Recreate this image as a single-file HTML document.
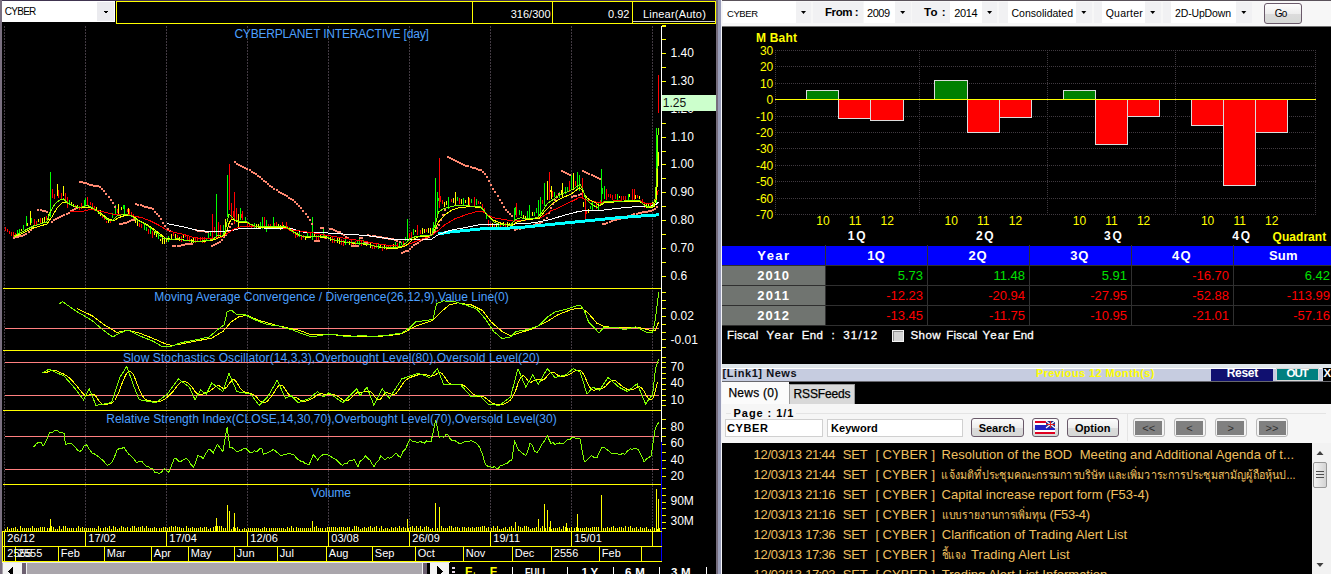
<!DOCTYPE html><html><head><meta charset="utf-8"><title>CYBER</title><style>
html,body{margin:0;padding:0;background:#000;}
body{width:1331px;height:574px;overflow:hidden;position:relative;font-family:"Liberation Sans",sans-serif;font-size:12px;color:#fff;}
.a{position:absolute;box-sizing:border-box;}
.t{position:absolute;white-space:nowrap;line-height:1;}
.b{font-weight:bold;}
svg{position:absolute;left:0;top:0;}
svg text{font-family:"Liberation Sans",sans-serif;}
.dd{position:absolute;background:#fff;box-sizing:border-box;}
.btn{position:absolute;box-sizing:border-box;border:1px solid #6a5a6a;border-radius:3px;background:linear-gradient(#fcfcfc,#eeeeee 50%,#dcdcdc 51%,#d6d8d6);color:#000;text-align:center;}
</style></head><body>
<svg width="1331" height="574" viewBox="0 0 1331 574">
<g shape-rendering="crispEdges">
<rect x="0" y="0" width="2" height="574" fill="#7a7080" />
<line x1="4.5" y1="26" x2="4.5" y2="531" stroke="#423a42" stroke-width="1" stroke-dasharray="2 1"/>
<line x1="85.5" y1="26" x2="85.5" y2="531" stroke="#423a42" stroke-width="1" stroke-dasharray="2 1"/>
<line x1="166.5" y1="26" x2="166.5" y2="531" stroke="#423a42" stroke-width="1" stroke-dasharray="2 1"/>
<line x1="247.5" y1="26" x2="247.5" y2="531" stroke="#423a42" stroke-width="1" stroke-dasharray="2 1"/>
<line x1="328.5" y1="26" x2="328.5" y2="531" stroke="#423a42" stroke-width="1" stroke-dasharray="2 1"/>
<line x1="409.5" y1="26" x2="409.5" y2="531" stroke="#423a42" stroke-width="1" stroke-dasharray="2 1"/>
<line x1="490.5" y1="26" x2="490.5" y2="531" stroke="#423a42" stroke-width="1" stroke-dasharray="2 1"/>
<line x1="571.5" y1="26" x2="571.5" y2="531" stroke="#423a42" stroke-width="1" stroke-dasharray="2 1"/>
<line x1="652.5" y1="26" x2="652.5" y2="531" stroke="#423a42" stroke-width="1" stroke-dasharray="2 1"/>
<line x1="3" y1="288.5" x2="661" y2="288.5" stroke="#ffff00" stroke-width="1" />
<line x1="3" y1="350.5" x2="661" y2="350.5" stroke="#ffff00" stroke-width="1" />
<line x1="3" y1="410.5" x2="661" y2="410.5" stroke="#ffff00" stroke-width="1" />
<line x1="3" y1="484.5" x2="661" y2="484.5" stroke="#ffff00" stroke-width="1" />
<line x1="5" y1="328.5" x2="659" y2="328.5" stroke="#ff8080" stroke-width="1" />
<line x1="5" y1="362.5" x2="659" y2="362.5" stroke="#ff8080" stroke-width="1" />
<line x1="5" y1="395.5" x2="659" y2="395.5" stroke="#ff8080" stroke-width="1" />
<line x1="5" y1="436.5" x2="659" y2="436.5" stroke="#ff8080" stroke-width="1" />
<line x1="5" y1="469.5" x2="659" y2="469.5" stroke="#ff8080" stroke-width="1" />
</g>
<g shape-rendering="crispEdges">
<rect x="5" y="227" width="1" height="4" fill="#ff0000" />
<rect x="7" y="229" width="1" height="3" fill="#ff0000" />
<rect x="9" y="231" width="1" height="3" fill="#ff0000" />
<rect x="11" y="232" width="1" height="4" fill="#ff0000" />
<rect x="13" y="232" width="1" height="6" fill="#ff0000" />
<rect x="15" y="233" width="1" height="4" fill="#ff0000" />
<rect x="17" y="230" width="1" height="5" fill="#00ff00" />
<rect x="19" y="229" width="1" height="5" fill="#00ff00" />
<rect x="21" y="229" width="1" height="2" fill="#ffff00" />
<rect x="23" y="225" width="1" height="5" fill="#00ff00" />
<rect x="27" y="223" width="1" height="3" fill="#ffff00" />
<rect x="31" y="218" width="1" height="5" fill="#00ff00" />
<rect x="34" y="219" width="1" height="6" fill="#ff0000" />
<rect x="36" y="221" width="1" height="4" fill="#ff0000" />
<rect x="38" y="219" width="1" height="3" fill="#ffff00" />
<rect x="40" y="218" width="1" height="6" fill="#ff0000" />
<rect x="42" y="218" width="1" height="5" fill="#ffff00" />
<rect x="44" y="217" width="1" height="5" fill="#ffff00" />
<rect x="46" y="216" width="1" height="4" fill="#ff0000" />
<rect x="48" y="214" width="1" height="6" fill="#ffff00" />
<rect x="71" y="202" width="1" height="3" fill="#ffff00" />
<rect x="73" y="204" width="1" height="3" fill="#ffff00" />
<rect x="75" y="205" width="1" height="3" fill="#ff0000" />
<rect x="77" y="205" width="1" height="3" fill="#ffff00" />
<rect x="79" y="206" width="1" height="4" fill="#ff0000" />
<rect x="81" y="203" width="1" height="6" fill="#ff0000" />
<rect x="85" y="198" width="1" height="7" fill="#00ff00" />
<rect x="90" y="202" width="1" height="3" fill="#ff0000" />
<rect x="92" y="203" width="1" height="4" fill="#ff0000" />
<rect x="94" y="206" width="1" height="5" fill="#ff0000" />
<rect x="96" y="207" width="1" height="4" fill="#ffff00" />
<rect x="98" y="210" width="1" height="4" fill="#ffff00" />
<rect x="100" y="210" width="1" height="6" fill="#ffff00" />
<rect x="102" y="214" width="1" height="4" fill="#ff0000" />
<rect x="104" y="217" width="1" height="3" fill="#ff0000" />
<rect x="106" y="221" width="1" height="2" fill="#ff0000" />
<rect x="108" y="220" width="1" height="3" fill="#ffff00" />
<rect x="110" y="219" width="1" height="4" fill="#ff0000" />
<rect x="112" y="213" width="1" height="5" fill="#00ff00" />
<rect x="117" y="209" width="1" height="4" fill="#ff0000" />
<rect x="121" y="207" width="1" height="3" fill="#ffff00" />
<rect x="123" y="205" width="1" height="4" fill="#00ff00" />
<rect x="127" y="209" width="1" height="3" fill="#ff0000" />
<rect x="129" y="209" width="1" height="7" fill="#ff0000" />
<rect x="131" y="212" width="1" height="4" fill="#ff0000" />
<rect x="133" y="214" width="1" height="5" fill="#ff0000" />
<rect x="135" y="217" width="1" height="6" fill="#ffff00" />
<rect x="137" y="221" width="1" height="5" fill="#ffff00" />
<rect x="139" y="223" width="1" height="4" fill="#ff0000" />
<rect x="141" y="224" width="1" height="4" fill="#ff0000" />
<rect x="144" y="223" width="1" height="7" fill="#00ff00" />
<rect x="146" y="227" width="1" height="4" fill="#00ff00" />
<rect x="148" y="229" width="1" height="5" fill="#ff0000" />
<rect x="150" y="228" width="1" height="6" fill="#00ff00" />
<rect x="152" y="231" width="1" height="7" fill="#ff0000" />
<rect x="154" y="232" width="1" height="3" fill="#ffff00" />
<rect x="156" y="233" width="1" height="4" fill="#ffff00" />
<rect x="158" y="233" width="1" height="6" fill="#00ff00" />
<rect x="160" y="239" width="1" height="2" fill="#ffff00" />
<rect x="162" y="238" width="1" height="6" fill="#ffff00" />
<rect x="164" y="238" width="1" height="6" fill="#ffff00" />
<rect x="166" y="238" width="1" height="4" fill="#ffff00" />
<rect x="168" y="236" width="1" height="6" fill="#00ff00" />
<rect x="171" y="234" width="1" height="5" fill="#ffff00" />
<rect x="173" y="232" width="1" height="4" fill="#ff0000" />
<rect x="175" y="234" width="1" height="4" fill="#ffff00" />
<rect x="177" y="235" width="1" height="4" fill="#ff0000" />
<rect x="179" y="237" width="1" height="4" fill="#ffff00" />
<rect x="181" y="236" width="1" height="6" fill="#ff0000" />
<rect x="183" y="235" width="1" height="3" fill="#ffff00" />
<rect x="185" y="234" width="1" height="3" fill="#ff0000" />
<rect x="187" y="235" width="1" height="5" fill="#ff0000" />
<rect x="189" y="237" width="1" height="5" fill="#ff0000" />
<rect x="191" y="239" width="1" height="4" fill="#ffff00" />
<rect x="193" y="238" width="1" height="5" fill="#ffff00" />
<rect x="195" y="237" width="1" height="6" fill="#ff0000" />
<rect x="197" y="237" width="1" height="5" fill="#ff0000" />
<rect x="200" y="237" width="1" height="5" fill="#ff0000" />
<rect x="202" y="237" width="1" height="6" fill="#ff0000" />
<rect x="204" y="237" width="1" height="6" fill="#ff0000" />
<rect x="206" y="238" width="1" height="3" fill="#00ff00" />
<rect x="208" y="232" width="1" height="7" fill="#00ff00" />
<rect x="210" y="231" width="1" height="5" fill="#00ff00" />
<rect x="214" y="227" width="1" height="6" fill="#ff0000" />
<rect x="233" y="211" width="1" height="6" fill="#ff0000" />
<rect x="241" y="214" width="1" height="4" fill="#ff0000" />
<rect x="247" y="222" width="1" height="4" fill="#ff0000" />
<rect x="249" y="224" width="1" height="3" fill="#ff0000" />
<rect x="251" y="224" width="1" height="4" fill="#ff0000" />
<rect x="254" y="223" width="1" height="5" fill="#00ff00" />
<rect x="256" y="224" width="1" height="4" fill="#ffff00" />
<rect x="258" y="224" width="1" height="5" fill="#ffff00" />
<rect x="260" y="222" width="1" height="5" fill="#00ff00" />
<rect x="268" y="224" width="1" height="4" fill="#ff0000" />
<rect x="270" y="224" width="1" height="4" fill="#ff0000" />
<rect x="274" y="223" width="1" height="5" fill="#ff0000" />
<rect x="278" y="224" width="1" height="5" fill="#ffff00" />
<rect x="280" y="225" width="1" height="5" fill="#ffff00" />
<rect x="283" y="225" width="1" height="3" fill="#ffff00" />
<rect x="287" y="226" width="1" height="2" fill="#ff0000" />
<rect x="289" y="227" width="1" height="4" fill="#ff0000" />
<rect x="291" y="228" width="1" height="4" fill="#ff0000" />
<rect x="293" y="231" width="1" height="3" fill="#ff0000" />
<rect x="295" y="233" width="1" height="5" fill="#ff0000" />
<rect x="297" y="232" width="1" height="5" fill="#ff0000" />
<rect x="299" y="232" width="1" height="5" fill="#00ff00" />
<rect x="301" y="235" width="1" height="5" fill="#ff0000" />
<rect x="303" y="235" width="1" height="3" fill="#ff0000" />
<rect x="305" y="236" width="1" height="4" fill="#ffff00" />
<rect x="307" y="232" width="1" height="4" fill="#00ff00" />
<rect x="310" y="232" width="1" height="4" fill="#ff0000" />
<rect x="314" y="233" width="1" height="3" fill="#ffff00" />
<rect x="316" y="235" width="1" height="6" fill="#ff0000" />
<rect x="318" y="235" width="1" height="5" fill="#ff0000" />
<rect x="320" y="235" width="1" height="3" fill="#ffff00" />
<rect x="324" y="235" width="1" height="4" fill="#ff0000" />
<rect x="326" y="236" width="1" height="2" fill="#ffff00" />
<rect x="328" y="237" width="1" height="2" fill="#ffff00" />
<rect x="330" y="237" width="1" height="4" fill="#ffff00" />
<rect x="332" y="237" width="1" height="6" fill="#ff0000" />
<rect x="334" y="238" width="1" height="5" fill="#ff0000" />
<rect x="337" y="238" width="1" height="5" fill="#ffff00" />
<rect x="339" y="238" width="1" height="6" fill="#ffff00" />
<rect x="341" y="239" width="1" height="6" fill="#ff0000" />
<rect x="343" y="240" width="1" height="6" fill="#ff0000" />
<rect x="345" y="238" width="1" height="7" fill="#00ff00" />
<rect x="347" y="241" width="1" height="2" fill="#ff0000" />
<rect x="349" y="241" width="1" height="4" fill="#ffff00" />
<rect x="351" y="240" width="1" height="6" fill="#ff0000" />
<rect x="353" y="242" width="1" height="5" fill="#ff0000" />
<rect x="355" y="241" width="1" height="5" fill="#ff0000" />
<rect x="357" y="241" width="1" height="3" fill="#00ff00" />
<rect x="359" y="239" width="1" height="6" fill="#00ff00" />
<rect x="361" y="241" width="1" height="5" fill="#ff0000" />
<rect x="363" y="240" width="1" height="5" fill="#00ff00" />
<rect x="366" y="242" width="1" height="4" fill="#ffff00" />
<rect x="368" y="242" width="1" height="3" fill="#ff0000" />
<rect x="370" y="243" width="1" height="5" fill="#ffff00" />
<rect x="372" y="245" width="1" height="4" fill="#ff0000" />
<rect x="374" y="245" width="1" height="4" fill="#ff0000" />
<rect x="376" y="243" width="1" height="5" fill="#ff0000" />
<rect x="378" y="243" width="1" height="6" fill="#00ff00" />
<rect x="380" y="244" width="1" height="4" fill="#ffff00" />
<rect x="382" y="246" width="1" height="5" fill="#ff0000" />
<rect x="384" y="244" width="1" height="5" fill="#ffff00" />
<rect x="386" y="245" width="1" height="5" fill="#ff0000" />
<rect x="388" y="246" width="1" height="2" fill="#ff0000" />
<rect x="390" y="245" width="1" height="3" fill="#ff0000" />
<rect x="393" y="244" width="1" height="4" fill="#ffff00" />
<rect x="395" y="242" width="1" height="6" fill="#00ff00" />
<rect x="397" y="243" width="1" height="5" fill="#ff0000" />
<rect x="399" y="241" width="1" height="6" fill="#00ff00" />
<rect x="401" y="242" width="1" height="3" fill="#00ff00" />
<rect x="403" y="241" width="1" height="5" fill="#ff0000" />
<rect x="405" y="237" width="1" height="4" fill="#00ff00" />
<rect x="409" y="233" width="1" height="7" fill="#ff0000" />
<rect x="411" y="232" width="1" height="6" fill="#ff0000" />
<rect x="413" y="229" width="1" height="6" fill="#00ff00" />
<rect x="415" y="230" width="1" height="2" fill="#ffff00" />
<rect x="420" y="230" width="1" height="4" fill="#ff0000" />
<rect x="422" y="228" width="1" height="6" fill="#ffff00" />
<rect x="424" y="229" width="1" height="4" fill="#ffff00" />
<rect x="426" y="229" width="1" height="3" fill="#ff0000" />
<rect x="428" y="228" width="1" height="5" fill="#ffff00" />
<rect x="430" y="228" width="1" height="6" fill="#ffff00" />
<rect x="432" y="228" width="1" height="3" fill="#00ff00" />
<rect x="438" y="198" width="1" height="3" fill="#00ff00" />
<rect x="440" y="196" width="1" height="6" fill="#ff0000" />
<rect x="442" y="200" width="1" height="4" fill="#ff0000" />
<rect x="444" y="202" width="1" height="5" fill="#ffff00" />
<rect x="446" y="201" width="1" height="4" fill="#ffff00" />
<rect x="451" y="199" width="1" height="3" fill="#ff0000" />
<rect x="453" y="198" width="1" height="5" fill="#ffff00" />
<rect x="457" y="197" width="1" height="4" fill="#00ff00" />
<rect x="459" y="198" width="1" height="6" fill="#ff0000" />
<rect x="461" y="199" width="1" height="5" fill="#ffff00" />
<rect x="463" y="198" width="1" height="7" fill="#00ff00" />
<rect x="465" y="200" width="1" height="3" fill="#ffff00" />
<rect x="469" y="198" width="1" height="7" fill="#ff0000" />
<rect x="471" y="199" width="1" height="4" fill="#00ff00" />
<rect x="476" y="199" width="1" height="6" fill="#00ff00" />
<rect x="478" y="201" width="1" height="3" fill="#ff0000" />
<rect x="480" y="202" width="1" height="2" fill="#ffff00" />
<rect x="482" y="204" width="1" height="4" fill="#ff0000" />
<rect x="484" y="208" width="1" height="3" fill="#ff0000" />
<rect x="486" y="213" width="1" height="6" fill="#00ff00" />
<rect x="488" y="220" width="1" height="6" fill="#ff0000" />
<rect x="490" y="223" width="1" height="4" fill="#ff0000" />
<rect x="492" y="223" width="1" height="4" fill="#ffff00" />
<rect x="494" y="224" width="1" height="3" fill="#ff0000" />
<rect x="496" y="223" width="1" height="4" fill="#ffff00" />
<rect x="498" y="222" width="1" height="5" fill="#00ff00" />
<rect x="500" y="223" width="1" height="5" fill="#ff0000" />
<rect x="503" y="222" width="1" height="4" fill="#ffff00" />
<rect x="505" y="223" width="1" height="4" fill="#ff0000" />
<rect x="507" y="222" width="1" height="5" fill="#ffff00" />
<rect x="509" y="223" width="1" height="3" fill="#ffff00" />
<rect x="511" y="223" width="1" height="2" fill="#ff0000" />
<rect x="515" y="207" width="1" height="8" fill="#00ff00" />
<rect x="519" y="210" width="1" height="5" fill="#00ff00" />
<rect x="521" y="211" width="1" height="5" fill="#00ff00" />
<rect x="523" y="215" width="1" height="3" fill="#ffff00" />
<rect x="525" y="216" width="1" height="2" fill="#ffff00" />
<rect x="527" y="211" width="1" height="7" fill="#00ff00" />
<rect x="532" y="212" width="1" height="4" fill="#ffff00" />
<rect x="534" y="212" width="1" height="4" fill="#00ff00" />
<rect x="536" y="208" width="1" height="5" fill="#00ff00" />
<rect x="542" y="200" width="1" height="4" fill="#ff0000" />
<rect x="550" y="190" width="1" height="2" fill="#ffff00" />
<rect x="552" y="191" width="1" height="6" fill="#ff0000" />
<rect x="554" y="192" width="1" height="5" fill="#00ff00" />
<rect x="556" y="195" width="1" height="4" fill="#ff0000" />
<rect x="559" y="192" width="1" height="6" fill="#00ff00" />
<rect x="561" y="190" width="1" height="4" fill="#ffff00" />
<rect x="565" y="187" width="1" height="7" fill="#00ff00" />
<rect x="567" y="187" width="1" height="4" fill="#00ff00" />
<rect x="575" y="181" width="1" height="5" fill="#ff0000" />
<rect x="583" y="202" width="1" height="5" fill="#ffff00" />
<rect x="586" y="210" width="1" height="4" fill="#ff0000" />
<rect x="588" y="209" width="1" height="4" fill="#ffff00" />
<rect x="590" y="206" width="1" height="3" fill="#00ff00" />
<rect x="592" y="201" width="1" height="9" fill="#00ff00" />
<rect x="594" y="205" width="1" height="2" fill="#ffff00" />
<rect x="596" y="204" width="1" height="5" fill="#ff0000" />
<rect x="598" y="203" width="1" height="7" fill="#00ff00" />
<rect x="600" y="200" width="1" height="5" fill="#ff0000" />
<rect x="602" y="188" width="1" height="6" fill="#00ff00" />
<rect x="608" y="194" width="1" height="3" fill="#ff0000" />
<rect x="610" y="194" width="1" height="4" fill="#ff0000" />
<rect x="612" y="195" width="1" height="5" fill="#ff0000" />
<rect x="615" y="194" width="1" height="5" fill="#ff0000" />
<rect x="617" y="194" width="1" height="6" fill="#00ff00" />
<rect x="619" y="196" width="1" height="2" fill="#ffff00" />
<rect x="621" y="196" width="1" height="6" fill="#ff0000" />
<rect x="623" y="196" width="1" height="4" fill="#ff0000" />
<rect x="625" y="196" width="1" height="4" fill="#ff0000" />
<rect x="629" y="194" width="1" height="3" fill="#ffff00" />
<rect x="635" y="195" width="1" height="4" fill="#ffff00" />
<rect x="637" y="195" width="1" height="3" fill="#ff0000" />
<rect x="639" y="196" width="1" height="3" fill="#ffff00" />
<rect x="642" y="199" width="1" height="5" fill="#ff0000" />
<rect x="644" y="203" width="1" height="5" fill="#ff0000" />
<rect x="646" y="204" width="1" height="4" fill="#ffff00" />
<rect x="648" y="204" width="1" height="3" fill="#ffff00" />
<rect x="650" y="204" width="1" height="4" fill="#ff0000" />
<rect x="652" y="202" width="1" height="6" fill="#ffff00" />
<rect x="654" y="203" width="1" height="4" fill="#ffff00" />
<rect x="54" y="194" width="1" height="5" fill="#ff0000" />
<rect x="58" y="190" width="1" height="8" fill="#ff0000" />
<rect x="61" y="193" width="1" height="7" fill="#ff0000" />
<rect x="65" y="193" width="1" height="8" fill="#ff0000" />
<rect x="67" y="197" width="1" height="11" fill="#ff0000" />
<rect x="69" y="200" width="1" height="5" fill="#00ff00" />
<rect x="50" y="172" width="1" height="45" fill="#00ff00" />
<rect x="57" y="184" width="1" height="12" fill="#ffff00" />
<rect x="63" y="186" width="1" height="10" fill="#ffff00" />
<rect x="52" y="189" width="1" height="9" fill="#ff0000" />
<rect x="30" y="211" width="1" height="14" fill="#ffff00" />
<rect x="26" y="216" width="1" height="10" fill="#00ff00" />
<rect x="115" y="205" width="1" height="10" fill="#00ff00" />
<rect x="118" y="204" width="1" height="10" fill="#ffff00" />
<rect x="124" y="205" width="1" height="9" fill="#00ff00" />
<rect x="128" y="208" width="1" height="7" fill="#ffff00" />
<rect x="87" y="197" width="1" height="9" fill="#ff0000" />
<rect x="84" y="200" width="1" height="7" fill="#00ff00" />
<rect x="212" y="214" width="1" height="27" fill="#ff0000" />
<rect x="216" y="194" width="1" height="43" fill="#00ff00" />
<rect x="218" y="222" width="1" height="15" fill="#ff0000" />
<rect x="220" y="225" width="1" height="12" fill="#ff0000" />
<rect x="223" y="225" width="1" height="10" fill="#00ff00" />
<rect x="225" y="219" width="1" height="10" fill="#ffff00" />
<rect x="227" y="175" width="1" height="42" fill="#00ff00" />
<rect x="229" y="164" width="1" height="46" fill="#ff0000" />
<rect x="231" y="203" width="1" height="17" fill="#ff0000" />
<rect x="234" y="192" width="1" height="32" fill="#ff0000" />
<rect x="236" y="208" width="1" height="14" fill="#ff0000" />
<rect x="238" y="214" width="1" height="13" fill="#ffff00" />
<rect x="240" y="208" width="1" height="12" fill="#00ff00" />
<rect x="242" y="211" width="1" height="9" fill="#ff0000" />
<rect x="245" y="217" width="1" height="6" fill="#00ff00" />
<rect x="262" y="217" width="1" height="12" fill="#00ff00" />
<rect x="264" y="217" width="1" height="11" fill="#ff0000" />
<rect x="266" y="220" width="1" height="12" fill="#00ff00" />
<rect x="273" y="217" width="1" height="10" fill="#00ff00" />
<rect x="276" y="222" width="1" height="6" fill="#ff0000" />
<rect x="282" y="222" width="1" height="7" fill="#ff0000" />
<rect x="286" y="222" width="1" height="7" fill="#ff0000" />
<rect x="312" y="217" width="1" height="23" fill="#00ff00" />
<rect x="323" y="229" width="1" height="8" fill="#00ff00" />
<rect x="407" y="219" width="1" height="22" fill="#00ff00" />
<rect x="417" y="225" width="1" height="10" fill="#ff0000" />
<rect x="433" y="222" width="1" height="12" fill="#00ff00" />
<rect x="435" y="178" width="1" height="54" fill="#00ff00" />
<rect x="437" y="192" width="1" height="23" fill="#00ff00" />
<rect x="439" y="158" width="1" height="50" fill="#ff0000" />
<rect x="448" y="197" width="1" height="12" fill="#00ff00" />
<rect x="455" y="192" width="1" height="13" fill="#ffff00" />
<rect x="468" y="197" width="1" height="9" fill="#ffff00" />
<rect x="474" y="197" width="1" height="10" fill="#ff0000" />
<rect x="514" y="208" width="1" height="14" fill="#00ff00" />
<rect x="516" y="203" width="1" height="14" fill="#ff0000" />
<rect x="529" y="205" width="1" height="14" fill="#00ff00" />
<rect x="538" y="200" width="1" height="17" fill="#00ff00" />
<rect x="540" y="197" width="1" height="20" fill="#00ff00" />
<rect x="544" y="183" width="1" height="23" fill="#00ff00" />
<rect x="547" y="181" width="1" height="19" fill="#ffff00" />
<rect x="549" y="172" width="1" height="28" fill="#ff0000" />
<rect x="551" y="186" width="1" height="13" fill="#ffff00" />
<rect x="562" y="183" width="1" height="14" fill="#ffff00" />
<rect x="569" y="181" width="1" height="11" fill="#ff0000" />
<rect x="571" y="175" width="1" height="15" fill="#00ff00" />
<rect x="573" y="173" width="1" height="17" fill="#ffff00" />
<rect x="577" y="172" width="1" height="18" fill="#00ff00" />
<rect x="579" y="175" width="1" height="16" fill="#00ff00" />
<rect x="582" y="178" width="1" height="20" fill="#ff0000" />
<rect x="585" y="199" width="1" height="22" fill="#ff0000" />
<rect x="601" y="169" width="1" height="33" fill="#00ff00" />
<rect x="604" y="186" width="1" height="13" fill="#00ff00" />
<rect x="606" y="189" width="1" height="11" fill="#ff0000" />
<rect x="632" y="189" width="1" height="11" fill="#ff0000" />
<rect x="634" y="189" width="1" height="11" fill="#ff0000" />
<rect x="628" y="194" width="1" height="6" fill="#00ff00" />
<rect x="656" y="128" width="1" height="77" fill="#00ff00" />
<rect x="658" y="75" width="1" height="38" fill="#ff0000" />
</g>
<g shape-rendering="crispEdges">
<rect x="13" y="237" width="2" height="2" fill="#ff8870" />
<rect x="15" y="236" width="2" height="2" fill="#ff8870" />
<rect x="17" y="236" width="2" height="2" fill="#ff8870" />
<rect x="19" y="235" width="2" height="2" fill="#ff8870" />
<rect x="21" y="235" width="2" height="2" fill="#ff8870" />
<rect x="23" y="234" width="2" height="2" fill="#ff8870" />
<rect x="25" y="233" width="2" height="2" fill="#ff8870" />
<rect x="28" y="231" width="2" height="2" fill="#ff8870" />
<rect x="30" y="229" width="2" height="2" fill="#ff8870" />
<rect x="32" y="227" width="2" height="2" fill="#ff8870" />
<rect x="37" y="209" width="2" height="2" fill="#ff8870" />
<rect x="40" y="209" width="2" height="2" fill="#ff8870" />
<rect x="42" y="210" width="2" height="2" fill="#ff8870" />
<rect x="44" y="210" width="2" height="2" fill="#ff8870" />
<rect x="46" y="211" width="2" height="2" fill="#ff8870" />
<rect x="51" y="221" width="2" height="2" fill="#ff8870" />
<rect x="53" y="219" width="2" height="2" fill="#ff8870" />
<rect x="55" y="218" width="2" height="2" fill="#ff8870" />
<rect x="57" y="217" width="2" height="2" fill="#ff8870" />
<rect x="59" y="216" width="2" height="2" fill="#ff8870" />
<rect x="61" y="215" width="2" height="2" fill="#ff8870" />
<rect x="63" y="214" width="2" height="2" fill="#ff8870" />
<rect x="66" y="213" width="2" height="2" fill="#ff8870" />
<rect x="68" y="212" width="2" height="2" fill="#ff8870" />
<rect x="70" y="210" width="2" height="2" fill="#ff8870" />
<rect x="72" y="209" width="2" height="2" fill="#ff8870" />
<rect x="74" y="208" width="2" height="2" fill="#ff8870" />
<rect x="76" y="207" width="2" height="2" fill="#ff8870" />
<rect x="79" y="181" width="2" height="2" fill="#ff8870" />
<rect x="81" y="181" width="2" height="2" fill="#ff8870" />
<rect x="83" y="182" width="2" height="2" fill="#ff8870" />
<rect x="85" y="182" width="2" height="2" fill="#ff8870" />
<rect x="87" y="183" width="2" height="2" fill="#ff8870" />
<rect x="89" y="184" width="2" height="2" fill="#ff8870" />
<rect x="91" y="184" width="2" height="2" fill="#ff8870" />
<rect x="93" y="185" width="2" height="2" fill="#ff8870" />
<rect x="95" y="185" width="2" height="2" fill="#ff8870" />
<rect x="97" y="185" width="2" height="2" fill="#ff8870" />
<rect x="99" y="186" width="2" height="2" fill="#ff8870" />
<rect x="101" y="188" width="2" height="2" fill="#ff8870" />
<rect x="103" y="190" width="2" height="2" fill="#ff8870" />
<rect x="105" y="193" width="2" height="2" fill="#ff8870" />
<rect x="108" y="196" width="2" height="2" fill="#ff8870" />
<rect x="110" y="199" width="2" height="2" fill="#ff8870" />
<rect x="112" y="202" width="2" height="2" fill="#ff8870" />
<rect x="114" y="206" width="2" height="2" fill="#ff8870" />
<rect x="119" y="223" width="2" height="2" fill="#ff8870" />
<rect x="121" y="223" width="2" height="2" fill="#ff8870" />
<rect x="123" y="222" width="2" height="2" fill="#ff8870" />
<rect x="125" y="222" width="2" height="2" fill="#ff8870" />
<rect x="127" y="221" width="2" height="2" fill="#ff8870" />
<rect x="129" y="220" width="2" height="2" fill="#ff8870" />
<rect x="131" y="219" width="2" height="2" fill="#ff8870" />
<rect x="133" y="219" width="2" height="2" fill="#ff8870" />
<rect x="135" y="203" width="2" height="2" fill="#ff8870" />
<rect x="137" y="204" width="2" height="2" fill="#ff8870" />
<rect x="140" y="204" width="2" height="2" fill="#ff8870" />
<rect x="142" y="205" width="2" height="2" fill="#ff8870" />
<rect x="144" y="206" width="2" height="2" fill="#ff8870" />
<rect x="146" y="206" width="2" height="2" fill="#ff8870" />
<rect x="148" y="207" width="2" height="2" fill="#ff8870" />
<rect x="150" y="207" width="2" height="2" fill="#ff8870" />
<rect x="152" y="208" width="2" height="2" fill="#ff8870" />
<rect x="154" y="211" width="2" height="2" fill="#ff8870" />
<rect x="156" y="213" width="2" height="2" fill="#ff8870" />
<rect x="158" y="215" width="2" height="2" fill="#ff8870" />
<rect x="160" y="218" width="2" height="2" fill="#ff8870" />
<rect x="162" y="222" width="2" height="2" fill="#ff8870" />
<rect x="164" y="225" width="2" height="2" fill="#ff8870" />
<rect x="167" y="228" width="2" height="2" fill="#ff8870" />
<rect x="169" y="230" width="2" height="2" fill="#ff8870" />
<rect x="195" y="229" width="2" height="2" fill="#ff8870" />
<rect x="197" y="230" width="2" height="2" fill="#ff8870" />
<rect x="199" y="230" width="2" height="2" fill="#ff8870" />
<rect x="201" y="230" width="2" height="2" fill="#ff8870" />
<rect x="203" y="230" width="2" height="2" fill="#ff8870" />
<rect x="205" y="231" width="2" height="2" fill="#ff8870" />
<rect x="207" y="231" width="2" height="2" fill="#ff8870" />
<rect x="172" y="245" width="2" height="2" fill="#ff8870" />
<rect x="174" y="245" width="2" height="2" fill="#ff8870" />
<rect x="177" y="245" width="2" height="2" fill="#ff8870" />
<rect x="179" y="245" width="2" height="2" fill="#ff8870" />
<rect x="181" y="244" width="2" height="2" fill="#ff8870" />
<rect x="183" y="244" width="2" height="2" fill="#ff8870" />
<rect x="185" y="243" width="2" height="2" fill="#ff8870" />
<rect x="187" y="243" width="2" height="2" fill="#ff8870" />
<rect x="189" y="243" width="2" height="2" fill="#ff8870" />
<rect x="191" y="243" width="2" height="2" fill="#ff8870" />
<rect x="211" y="245" width="2" height="2" fill="#ff8870" />
<rect x="213" y="244" width="2" height="2" fill="#ff8870" />
<rect x="215" y="243" width="2" height="2" fill="#ff8870" />
<rect x="217" y="242" width="2" height="2" fill="#ff8870" />
<rect x="219" y="241" width="2" height="2" fill="#ff8870" />
<rect x="221" y="239" width="2" height="2" fill="#ff8870" />
<rect x="223" y="236" width="2" height="2" fill="#ff8870" />
<rect x="225" y="234" width="2" height="2" fill="#ff8870" />
<rect x="227" y="230" width="2" height="2" fill="#ff8870" />
<rect x="229" y="226" width="2" height="2" fill="#ff8870" />
<rect x="231" y="223" width="2" height="2" fill="#ff8870" />
<rect x="234" y="161" width="2" height="2" fill="#ff8870" />
<rect x="236" y="163" width="2" height="2" fill="#ff8870" />
<rect x="238" y="164" width="2" height="2" fill="#ff8870" />
<rect x="240" y="165" width="2" height="2" fill="#ff8870" />
<rect x="242" y="166" width="2" height="2" fill="#ff8870" />
<rect x="244" y="167" width="2" height="2" fill="#ff8870" />
<rect x="246" y="168" width="2" height="2" fill="#ff8870" />
<rect x="249" y="169" width="2" height="2" fill="#ff8870" />
<rect x="251" y="171" width="2" height="2" fill="#ff8870" />
<rect x="253" y="172" width="2" height="2" fill="#ff8870" />
<rect x="255" y="173" width="2" height="2" fill="#ff8870" />
<rect x="257" y="175" width="2" height="2" fill="#ff8870" />
<rect x="259" y="176" width="2" height="2" fill="#ff8870" />
<rect x="261" y="178" width="2" height="2" fill="#ff8870" />
<rect x="263" y="180" width="2" height="2" fill="#ff8870" />
<rect x="265" y="181" width="2" height="2" fill="#ff8870" />
<rect x="267" y="183" width="2" height="2" fill="#ff8870" />
<rect x="269" y="185" width="2" height="2" fill="#ff8870" />
<rect x="271" y="186" width="2" height="2" fill="#ff8870" />
<rect x="273" y="188" width="2" height="2" fill="#ff8870" />
<rect x="276" y="189" width="2" height="2" fill="#ff8870" />
<rect x="278" y="191" width="2" height="2" fill="#ff8870" />
<rect x="280" y="192" width="2" height="2" fill="#ff8870" />
<rect x="282" y="193" width="2" height="2" fill="#ff8870" />
<rect x="284" y="194" width="2" height="2" fill="#ff8870" />
<rect x="286" y="195" width="2" height="2" fill="#ff8870" />
<rect x="288" y="197" width="2" height="2" fill="#ff8870" />
<rect x="290" y="198" width="2" height="2" fill="#ff8870" />
<rect x="292" y="199" width="2" height="2" fill="#ff8870" />
<rect x="294" y="201" width="2" height="2" fill="#ff8870" />
<rect x="296" y="203" width="2" height="2" fill="#ff8870" />
<rect x="298" y="205" width="2" height="2" fill="#ff8870" />
<rect x="300" y="207" width="2" height="2" fill="#ff8870" />
<rect x="302" y="210" width="2" height="2" fill="#ff8870" />
<rect x="305" y="213" width="2" height="2" fill="#ff8870" />
<rect x="307" y="216" width="2" height="2" fill="#ff8870" />
<rect x="309" y="219" width="2" height="2" fill="#ff8870" />
<rect x="311" y="223" width="2" height="2" fill="#ff8870" />
<rect x="314" y="240" width="2" height="2" fill="#ff8870" />
<rect x="316" y="240" width="2" height="2" fill="#ff8870" />
<rect x="318" y="240" width="2" height="2" fill="#ff8870" />
<rect x="320" y="227" width="2" height="2" fill="#ff8870" />
<rect x="322" y="227" width="2" height="2" fill="#ff8870" />
<rect x="325" y="237" width="2" height="2" fill="#ff8870" />
<rect x="329" y="228" width="2" height="2" fill="#ff8870" />
<rect x="331" y="228" width="2" height="2" fill="#ff8870" />
<rect x="333" y="229" width="2" height="2" fill="#ff8870" />
<rect x="335" y="230" width="2" height="2" fill="#ff8870" />
<rect x="337" y="231" width="2" height="2" fill="#ff8870" />
<rect x="339" y="231" width="2" height="2" fill="#ff8870" />
<rect x="341" y="233" width="2" height="2" fill="#ff8870" />
<rect x="343" y="234" width="2" height="2" fill="#ff8870" />
<rect x="345" y="236" width="2" height="2" fill="#ff8870" />
<rect x="347" y="237" width="2" height="2" fill="#ff8870" />
<rect x="351" y="245" width="2" height="2" fill="#ff8870" />
<rect x="353" y="245" width="2" height="2" fill="#ff8870" />
<rect x="355" y="245" width="2" height="2" fill="#ff8870" />
<rect x="357" y="245" width="2" height="2" fill="#ff8870" />
<rect x="359" y="237" width="2" height="2" fill="#ff8870" />
<rect x="361" y="237" width="2" height="2" fill="#ff8870" />
<rect x="364" y="242" width="2" height="2" fill="#ff8870" />
<rect x="366" y="242" width="2" height="2" fill="#ff8870" />
<rect x="367" y="234" width="2" height="2" fill="#ff8870" />
<rect x="369" y="235" width="2" height="2" fill="#ff8870" />
<rect x="372" y="235" width="2" height="2" fill="#ff8870" />
<rect x="374" y="235" width="2" height="2" fill="#ff8870" />
<rect x="376" y="236" width="2" height="2" fill="#ff8870" />
<rect x="378" y="236" width="2" height="2" fill="#ff8870" />
<rect x="380" y="236" width="2" height="2" fill="#ff8870" />
<rect x="382" y="237" width="2" height="2" fill="#ff8870" />
<rect x="384" y="237" width="2" height="2" fill="#ff8870" />
<rect x="386" y="237" width="2" height="2" fill="#ff8870" />
<rect x="388" y="238" width="2" height="2" fill="#ff8870" />
<rect x="390" y="238" width="2" height="2" fill="#ff8870" />
<rect x="392" y="238" width="2" height="2" fill="#ff8870" />
<rect x="394" y="239" width="2" height="2" fill="#ff8870" />
<rect x="396" y="240" width="2" height="2" fill="#ff8870" />
<rect x="399" y="241" width="2" height="2" fill="#ff8870" />
<rect x="401" y="252" width="2" height="2" fill="#ff8870" />
<rect x="403" y="251" width="2" height="2" fill="#ff8870" />
<rect x="405" y="250" width="2" height="2" fill="#ff8870" />
<rect x="407" y="250" width="2" height="2" fill="#ff8870" />
<rect x="409" y="248" width="2" height="2" fill="#ff8870" />
<rect x="411" y="246" width="2" height="2" fill="#ff8870" />
<rect x="413" y="244" width="2" height="2" fill="#ff8870" />
<rect x="415" y="243" width="2" height="2" fill="#ff8870" />
<rect x="417" y="242" width="2" height="2" fill="#ff8870" />
<rect x="419" y="240" width="2" height="2" fill="#ff8870" />
<rect x="421" y="239" width="2" height="2" fill="#ff8870" />
<rect x="424" y="238" width="2" height="2" fill="#ff8870" />
<rect x="426" y="237" width="2" height="2" fill="#ff8870" />
<rect x="428" y="236" width="2" height="2" fill="#ff8870" />
<rect x="430" y="234" width="2" height="2" fill="#ff8870" />
<rect x="432" y="233" width="2" height="2" fill="#ff8870" />
<rect x="434" y="231" width="2" height="2" fill="#ff8870" />
<rect x="436" y="227" width="2" height="2" fill="#ff8870" />
<rect x="438" y="224" width="2" height="2" fill="#ff8870" />
<rect x="440" y="219" width="2" height="2" fill="#ff8870" />
<rect x="442" y="214" width="2" height="2" fill="#ff8870" />
<rect x="444" y="209" width="2" height="2" fill="#ff8870" />
<rect x="447" y="156" width="2" height="2" fill="#ff8870" />
<rect x="449" y="157" width="2" height="2" fill="#ff8870" />
<rect x="451" y="158" width="2" height="2" fill="#ff8870" />
<rect x="453" y="159" width="2" height="2" fill="#ff8870" />
<rect x="455" y="160" width="2" height="2" fill="#ff8870" />
<rect x="457" y="161" width="2" height="2" fill="#ff8870" />
<rect x="459" y="162" width="2" height="2" fill="#ff8870" />
<rect x="461" y="163" width="2" height="2" fill="#ff8870" />
<rect x="463" y="164" width="2" height="2" fill="#ff8870" />
<rect x="465" y="165" width="2" height="2" fill="#ff8870" />
<rect x="467" y="165" width="2" height="2" fill="#ff8870" />
<rect x="470" y="166" width="2" height="2" fill="#ff8870" />
<rect x="472" y="167" width="2" height="2" fill="#ff8870" />
<rect x="474" y="167" width="2" height="2" fill="#ff8870" />
<rect x="476" y="168" width="2" height="2" fill="#ff8870" />
<rect x="478" y="169" width="2" height="2" fill="#ff8870" />
<rect x="480" y="169" width="2" height="2" fill="#ff8870" />
<rect x="482" y="171" width="2" height="2" fill="#ff8870" />
<rect x="484" y="173" width="2" height="2" fill="#ff8870" />
<rect x="486" y="176" width="2" height="2" fill="#ff8870" />
<rect x="488" y="180" width="2" height="2" fill="#ff8870" />
<rect x="490" y="184" width="2" height="2" fill="#ff8870" />
<rect x="492" y="188" width="2" height="2" fill="#ff8870" />
<rect x="494" y="191" width="2" height="2" fill="#ff8870" />
<rect x="497" y="195" width="2" height="2" fill="#ff8870" />
<rect x="499" y="199" width="2" height="2" fill="#ff8870" />
<rect x="501" y="202" width="2" height="2" fill="#ff8870" />
<rect x="503" y="206" width="2" height="2" fill="#ff8870" />
<rect x="505" y="209" width="2" height="2" fill="#ff8870" />
<rect x="507" y="211" width="2" height="2" fill="#ff8870" />
<rect x="509" y="213" width="2" height="2" fill="#ff8870" />
<rect x="511" y="215" width="2" height="2" fill="#ff8870" />
<rect x="514" y="229" width="2" height="2" fill="#ff8870" />
<rect x="516" y="228" width="2" height="2" fill="#ff8870" />
<rect x="519" y="228" width="2" height="2" fill="#ff8870" />
<rect x="521" y="227" width="2" height="2" fill="#ff8870" />
<rect x="523" y="227" width="2" height="2" fill="#ff8870" />
<rect x="525" y="226" width="2" height="2" fill="#ff8870" />
<rect x="527" y="226" width="2" height="2" fill="#ff8870" />
<rect x="529" y="225" width="2" height="2" fill="#ff8870" />
<rect x="531" y="225" width="2" height="2" fill="#ff8870" />
<rect x="533" y="224" width="2" height="2" fill="#ff8870" />
<rect x="535" y="223" width="2" height="2" fill="#ff8870" />
<rect x="537" y="223" width="2" height="2" fill="#ff8870" />
<rect x="539" y="222" width="2" height="2" fill="#ff8870" />
<rect x="541" y="221" width="2" height="2" fill="#ff8870" />
<rect x="543" y="219" width="2" height="2" fill="#ff8870" />
<rect x="546" y="217" width="2" height="2" fill="#ff8870" />
<rect x="548" y="212" width="2" height="2" fill="#ff8870" />
<rect x="550" y="207" width="2" height="2" fill="#ff8870" />
<rect x="552" y="203" width="2" height="2" fill="#ff8870" />
<rect x="554" y="199" width="2" height="2" fill="#ff8870" />
<rect x="556" y="196" width="2" height="2" fill="#ff8870" />
<rect x="558" y="193" width="2" height="2" fill="#ff8870" />
<rect x="561" y="170" width="2" height="2" fill="#ff8870" />
<rect x="563" y="171" width="2" height="2" fill="#ff8870" />
<rect x="565" y="172" width="2" height="2" fill="#ff8870" />
<rect x="567" y="173" width="2" height="2" fill="#ff8870" />
<rect x="569" y="174" width="2" height="2" fill="#ff8870" />
<rect x="571" y="196" width="2" height="2" fill="#ff8870" />
<rect x="573" y="195" width="2" height="2" fill="#ff8870" />
<rect x="575" y="195" width="2" height="2" fill="#ff8870" />
<rect x="578" y="194" width="2" height="2" fill="#ff8870" />
<rect x="580" y="193" width="2" height="2" fill="#ff8870" />
<rect x="582" y="170" width="2" height="2" fill="#ff8870" />
<rect x="584" y="171" width="2" height="2" fill="#ff8870" />
<rect x="586" y="172" width="2" height="2" fill="#ff8870" />
<rect x="588" y="173" width="2" height="2" fill="#ff8870" />
<rect x="591" y="174" width="2" height="2" fill="#ff8870" />
<rect x="593" y="175" width="2" height="2" fill="#ff8870" />
<rect x="595" y="176" width="2" height="2" fill="#ff8870" />
<rect x="597" y="177" width="2" height="2" fill="#ff8870" />
<rect x="599" y="178" width="2" height="2" fill="#ff8870" />
<rect x="602" y="223" width="2" height="2" fill="#ff8870" />
<rect x="604" y="223" width="2" height="2" fill="#ff8870" />
<rect x="606" y="222" width="2" height="2" fill="#ff8870" />
<rect x="609" y="221" width="2" height="2" fill="#ff8870" />
<rect x="611" y="220" width="2" height="2" fill="#ff8870" />
<rect x="613" y="219" width="2" height="2" fill="#ff8870" />
<rect x="615" y="219" width="2" height="2" fill="#ff8870" />
<rect x="617" y="218" width="2" height="2" fill="#ff8870" />
<rect x="619" y="218" width="2" height="2" fill="#ff8870" />
<rect x="621" y="217" width="2" height="2" fill="#ff8870" />
<rect x="623" y="216" width="2" height="2" fill="#ff8870" />
<rect x="625" y="216" width="2" height="2" fill="#ff8870" />
<rect x="627" y="215" width="2" height="2" fill="#ff8870" />
<rect x="629" y="215" width="2" height="2" fill="#ff8870" />
<rect x="631" y="214" width="2" height="2" fill="#ff8870" />
<rect x="633" y="213" width="2" height="2" fill="#ff8870" />
<rect x="636" y="213" width="2" height="2" fill="#ff8870" />
<rect x="638" y="212" width="2" height="2" fill="#ff8870" />
<rect x="640" y="212" width="2" height="2" fill="#ff8870" />
<rect x="642" y="211" width="2" height="2" fill="#ff8870" />
<rect x="644" y="211" width="2" height="2" fill="#ff8870" />
<rect x="646" y="211" width="2" height="2" fill="#ff8870" />
<rect x="648" y="210" width="2" height="2" fill="#ff8870" />
<rect x="650" y="210" width="2" height="2" fill="#ff8870" />
<rect x="652" y="209" width="2" height="2" fill="#ff8870" />
<rect x="654" y="208" width="2" height="2" fill="#ff8870" />
<rect x="656" y="206" width="2" height="2" fill="#ff8870" />
</g>
<polyline points="438.0,234.0 450.2,232.0 467.0,230.3 483.7,228.6 500.4,228.3 517.1,227.8 533.8,226.1 550.6,224.5 567.3,222.8 584.0,221.1 600.8,219.4 617.6,217.8 642.7,215.9 655.3,215.2 659.0,214.0" fill="none" stroke="#00ffff" stroke-width="3" shape-rendering="crispEdges"/>
<polyline points="167.3,223.6 184.0,227.0 197.4,230.3 209.0,231.5 222.0,231.5 232.0,230.5 240.0,228.5 262.0,228.0 290.0,228.2 302.5,232.0 328.0,233.0 366.5,235.5 398.0,240.0 415.5,239.9 431.8,239.0 438.5,234.5 450.2,230.3 467.0,227.3 480.3,224.5 513.8,224.1 533.8,222.8 550.6,219.4 567.3,214.4 580.0,211.1 602.6,210.2 617.6,208.3 630.2,207.1 642.7,206.5 654.0,205.8 659.0,202.0" fill="none" stroke="#ffffff" stroke-width="1" shape-rendering="crispEdges"/>
<polyline points="70.0,212.0 83.7,211.0 90.3,209.4 100.4,211.0 113.8,214.4 127.2,214.4 133.8,216.0 142.2,217.8 150.6,221.0 159.0,225.3 167.3,230.3 175.7,232.8 184.0,234.5 192.4,237.0 200.8,238.7 209.0,238.7 217.5,237.8 222.0,237.0 228.0,233.0 234.0,229.0 240.0,227.0 250.0,226.0 262.0,226.0 276.0,226.5 290.0,229.5 315.0,233.2 340.0,237.6 365.3,241.4 377.8,243.9 390.0,245.5 403.0,246.4 406.7,245.0 416.7,241.2 431.8,235.3 438.5,230.3 445.2,224.5 455.2,218.6 467.0,214.4 475.3,212.0 482.0,211.0 487.0,214.4 493.7,217.8 503.7,219.4 513.8,221.1 523.8,220.3 533.8,218.6 542.2,217.0 550.6,211.0 559.0,207.7 567.3,203.5 575.7,199.4 580.0,197.0 585.0,199.6 592.5,201.4 600.0,202.7 605.0,201.4 617.6,200.8 627.7,201.4 634.0,200.2 640.2,200.8 645.2,203.3 652.8,204.0 655.3,200.2 658.4,190.0" fill="none" stroke="#ff0000" stroke-width="1" shape-rendering="crispEdges"/>
<polyline points="14.2,237.0 25.0,232.0 33.5,228.0 46.8,224.0 52.0,217.0 57.0,208.0 62.0,203.0 66.0,202.0 70.0,204.5 76.0,207.0 83.0,208.0 89.0,207.0 95.0,209.5 102.0,214.0 109.0,219.5 114.0,220.5 119.0,217.5 125.0,215.5 132.0,216.0 139.0,220.5 146.0,224.0 153.0,228.5 160.0,234.0 166.0,238.5 173.0,239.5 180.0,239.2 187.0,240.5 195.0,241.2 203.0,241.3 211.0,240.5 216.0,239.0 220.0,237.0 224.0,235.5 227.0,230.0 229.5,222.0 232.0,219.0 236.0,221.0 241.0,222.5 247.0,222.5 252.0,225.0 258.0,227.0 272.0,227.0 288.0,228.0 294.0,232.0 300.0,235.5 308.0,237.5 314.0,236.5 320.0,237.0 328.0,238.0 336.0,240.5 347.0,242.5 357.0,243.5 368.0,244.5 376.0,246.5 386.0,248.0 398.0,248.0 404.0,246.5 408.0,244.0 412.0,240.0 418.0,237.0 431.8,235.8 438.5,222.0 445.2,214.4 451.9,210.2 458.6,207.7 470.3,206.6 482.0,207.7 487.0,215.2 493.7,220.3 502.0,223.6 512.0,225.3 517.1,222.0 527.2,219.4 538.9,218.6 545.6,210.2 552.3,203.5 560.6,198.5 570.7,194.3 579.9,187.6 583.2,191.8 587.4,198.5 594.1,201.9 600.0,206.0 604.0,202.7 622.0,201.5 640.0,201.5 645.0,205.5 650.0,207.3 654.0,206.5 656.0,200.0 657.5,181.0 658.5,152.0" fill="none" stroke="#ffff00" stroke-width="1" shape-rendering="crispEdges"/>
<polyline points="14.2,236.2 25.0,230.3 33.5,226.0 46.8,222.0 50.2,212.0 55.2,203.5 60.2,199.9 63.6,198.9 67.0,202.7 73.6,206.0 80.3,207.7 87.0,205.2 93.7,208.6 100.4,213.6 107.0,219.4 112.0,221.0 117.0,216.0 123.8,214.4 130.5,215.3 137.2,220.3 143.9,223.6 150.6,227.8 157.3,233.7 164.0,238.7 170.7,239.5 177.3,238.7 184.0,240.3 192.4,241.2 200.8,241.2 209.0,240.3 214.0,238.7 217.5,235.3 222.0,236.2 225.0,232.0 227.5,220.0 229.0,214.0 231.0,216.0 235.0,220.0 240.0,222.0 246.0,221.0 250.0,224.0 256.0,226.5 270.0,226.5 286.0,227.0 292.0,231.0 298.0,235.0 306.0,237.0 312.0,236.0 318.0,236.5 326.0,237.0 334.0,240.0 345.0,242.0 355.0,243.0 366.0,244.0 374.0,246.0 384.0,247.5 396.0,247.5 402.0,246.0 406.0,243.0 410.0,238.7 416.7,236.2 431.8,235.3 436.0,222.0 438.5,212.0 443.5,208.6 450.2,206.9 456.9,205.2 470.3,206.0 480.3,206.9 483.7,210.2 488.7,217.0 493.7,222.0 500.4,224.5 510.4,225.3 515.4,219.4 520.5,217.8 527.2,218.6 537.2,217.8 542.2,212.0 547.2,203.5 552.3,200.2 559.0,195.2 567.3,191.8 574.0,188.5 579.9,184.3 582.4,188.5 585.7,198.5 590.7,203.5 597.6,207.7 601.3,204.0 605.0,201.4 617.6,201.2 630.0,200.8 640.0,200.8 644.0,205.2 647.7,207.1 652.8,206.5 655.3,197.7 656.8,175.0 657.6,150.0 658.2,128.0" fill="none" stroke="#80ff00" stroke-width="1" shape-rendering="crispEdges"/>
<polyline points="76.6,308.4 92.0,315.7 105.9,326.0 117.0,332.4 128.2,330.2 139.3,333.0 153.2,338.5 167.2,344.6 172.8,345.5 195.0,341.3 211.8,338.0 222.9,331.5 231.3,321.8 239.6,316.2 248.0,315.7 259.0,320.4 278.6,326.0 298.0,330.0 312.0,335.0 334.3,334.9 360.0,336.6 374.0,336.6 387.9,335.7 401.8,333.8 415.7,326.0 432.4,320.4 440.8,312.0 449.2,305.0 457.5,302.8 471.5,305.0 482.6,310.6 491.0,321.8 502.1,331.5 510.5,335.7 518.8,333.0 532.8,328.8 546.7,321.8 557.8,314.8 571.8,309.3 581.5,307.9 588.5,313.4 596.9,323.2 605.2,326.8 624.7,327.9 638.6,327.4 649.8,330.2 655.4,330.2 658.7,321.8" fill="none" stroke="#ffff00" stroke-width="1" shape-rendering="crispEdges"/>
<polyline points="59.3,303.7 62.7,301.7 75.2,310.6 92.0,320.4 103.0,330.0 112.8,337.0 119.8,333.0 128.0,330.0 139.3,335.7 153.2,341.3 161.6,346.3 170.0,346.9 181.0,342.7 195.0,340.0 209.0,337.0 217.3,330.0 224.3,324.6 227.0,312.0 231.3,310.0 236.8,314.8 245.2,314.8 256.3,320.4 267.5,324.6 278.6,326.0 292.6,330.0 303.7,334.3 312.0,337.0 320.4,335.2 334.3,334.3 348.3,337.0 360.0,335.7 374.0,336.3 387.9,335.2 401.8,333.0 410.0,327.4 415.7,321.8 426.9,320.4 433.0,319.0 436.6,303.7 443.6,300.9 454.7,301.7 465.9,305.0 477.0,309.3 485.4,319.0 493.7,331.5 502.1,338.5 510.5,337.0 516.0,331.5 527.2,329.6 538.3,326.0 546.7,317.6 555.0,312.0 566.2,309.3 574.5,306.5 580.1,305.0 584.3,310.6 588.5,321.8 594.0,327.4 599.0,333.0 603.8,327.4 616.3,327.4 624.7,329.6 635.8,326.8 647.0,332.4 652.6,333.0 655.4,319.0 658.7,292.5" fill="none" stroke="#80ff00" stroke-width="1" shape-rendering="crispEdges"/>
<polyline points="44.0,373.0 45.5,372.7 47.0,372.2 48.5,371.6 50.0,371.1 51.5,370.7 53.0,370.4 54.5,370.5 56.0,370.8 57.5,371.3 59.0,372.0 60.5,372.6 62.0,373.3 63.5,374.0 65.0,374.8 66.5,375.7 68.0,376.8 69.5,378.1 71.0,379.5 72.5,381.1 74.0,382.8 75.5,384.5 77.0,386.3 78.5,388.1 80.0,389.9 81.5,391.8 83.0,393.7 84.5,395.1 86.0,395.8 87.5,395.8 89.0,394.9 90.5,394.5 92.0,394.3 93.5,394.2 95.0,395.3 96.5,397.2 98.0,399.4 99.5,401.5 101.0,403.1 102.5,404.2 104.0,404.7 105.5,404.4 107.0,404.1 108.5,403.9 110.0,403.6 111.5,403.3 113.0,402.2 114.5,400.5 116.0,398.2 117.5,395.4 119.0,391.7 120.5,387.7 122.0,383.6 123.5,380.0 125.0,376.6 126.5,373.6 128.0,371.9 129.5,371.5 131.0,371.9 132.5,373.5 134.0,376.1 135.5,379.6 137.0,383.6 138.5,387.6 140.0,391.2 141.5,394.2 143.0,396.6 144.5,398.3 146.0,399.7 147.5,400.5 149.0,400.8 150.5,401.0 152.0,401.3 153.5,401.5 155.0,401.8 156.5,401.9 158.0,401.9 159.5,401.6 161.0,401.1 162.5,400.4 164.0,399.6 165.5,398.5 167.0,397.4 168.5,396.1 170.0,394.6 171.5,393.1 173.0,391.4 174.5,389.6 176.0,387.6 177.5,385.5 179.0,383.7 180.5,382.4 182.0,381.6 183.5,381.3 185.0,381.5 186.5,382.1 188.0,383.2 189.5,384.3 191.0,385.9 192.5,387.8 194.0,390.0 195.5,392.1 197.0,393.8 198.5,394.6 200.0,394.8 201.5,394.7 203.0,394.2 204.5,393.1 206.0,392.6 207.5,392.0 209.0,391.3 210.5,390.6 212.0,389.4 213.5,388.2 215.0,387.0 216.5,386.1 218.0,385.7 219.5,386.0 221.0,387.0 222.5,388.1 224.0,388.5 225.5,388.0 227.0,386.9 228.5,384.6 230.0,382.6 231.5,381.0 233.0,379.7 234.5,380.0 236.0,381.4 237.5,383.5 239.0,386.3 240.5,388.5 242.0,390.2 243.5,391.5 245.0,392.3 246.5,392.6 248.0,392.9 249.5,393.2 251.0,393.5 252.5,394.1 254.0,395.1 255.5,396.2 257.0,397.6 258.5,399.3 260.0,400.8 261.5,401.9 263.0,402.5 264.5,402.5 266.0,402.0 267.5,401.0 269.0,399.3 270.5,397.4 272.0,395.4 273.5,393.3 275.0,390.9 276.5,388.4 278.0,386.4 279.5,385.2 281.0,385.0 282.5,385.7 284.0,387.3 285.5,389.6 287.0,392.1 288.5,394.0 290.0,395.4 291.5,396.4 293.0,396.9 294.5,397.3 296.0,397.7 297.5,398.4 299.0,399.3 300.5,400.2 302.0,400.9 303.5,401.2 305.0,401.2 306.5,400.9 308.0,400.4 309.5,399.8 311.0,399.1 312.5,398.3 314.0,397.4 315.5,396.4 317.0,395.3 318.5,394.4 320.0,393.8 321.5,393.7 323.0,394.0 324.5,394.3 326.0,394.6 327.5,394.9 329.0,394.9 330.5,394.8 332.0,394.7 333.5,394.6 335.0,394.9 336.5,395.5 338.0,396.5 339.5,397.5 341.0,398.6 342.5,399.6 344.0,400.3 345.5,400.5 347.0,400.5 348.5,400.0 350.0,399.1 351.5,397.8 353.0,396.3 354.5,394.8 356.0,393.3 357.5,392.3 359.0,392.0 360.5,392.0 362.0,392.2 363.5,392.0 365.0,391.8 366.5,391.7 368.0,391.6 369.5,391.3 371.0,391.8 372.5,393.4 374.0,395.8 375.5,397.6 377.0,399.1 378.5,399.8 380.0,399.5 381.5,397.9 383.0,395.8 384.5,394.0 386.0,393.0 387.5,392.8 389.0,393.3 390.5,393.8 392.0,394.6 393.5,394.8 395.0,394.2 396.5,392.9 398.0,391.1 399.5,388.7 401.0,386.4 402.5,384.2 404.0,382.3 405.5,380.7 407.0,379.4 408.5,378.3 410.0,377.5 411.5,377.0 413.0,376.5 414.5,376.0 416.0,375.5 417.5,375.0 419.0,374.5 420.5,374.3 422.0,374.2 423.5,374.2 425.0,374.5 426.5,374.8 428.0,375.4 429.5,375.9 431.0,376.1 432.5,376.0 434.0,375.5 435.5,374.7 437.0,373.5 438.5,372.8 440.0,372.6 441.5,373.1 443.0,374.8 444.5,376.7 446.0,378.9 447.5,381.2 449.0,382.8 450.5,383.9 452.0,384.5 453.5,384.5 455.0,384.5 456.5,384.5 458.0,384.5 459.5,384.5 461.0,384.7 462.5,385.0 464.0,385.7 465.5,386.6 467.0,387.8 468.5,389.2 470.0,390.9 471.5,392.5 473.0,393.8 474.5,394.9 476.0,395.6 477.5,396.1 479.0,396.3 480.5,396.3 482.0,396.5 483.5,396.9 485.0,397.6 486.5,398.6 488.0,399.8 489.5,401.1 491.0,402.2 492.5,403.1 494.0,403.8 495.5,404.3 497.0,404.6 498.5,404.8 500.0,404.9 501.5,404.8 503.0,404.4 504.5,403.9 506.0,403.1 507.5,402.2 509.0,401.1 510.5,400.0 512.0,398.0 513.5,395.3 515.0,392.1 516.5,388.2 518.0,383.4 519.5,379.9 521.0,377.3 522.5,376.0 524.0,375.9 525.5,377.6 527.0,379.6 528.5,381.3 530.0,382.2 531.5,382.1 533.0,381.0 534.5,380.1 536.0,379.3 537.5,379.2 539.0,379.4 540.5,379.8 542.0,380.1 543.5,379.8 545.0,378.7 546.5,377.0 548.0,374.8 549.5,373.2 551.0,372.2 552.5,372.1 554.0,372.5 555.5,373.4 557.0,374.7 558.5,375.5 560.0,376.1 561.5,376.5 563.0,376.5 564.5,376.1 566.0,375.8 567.5,375.2 569.0,374.6 570.5,373.8 572.0,372.8 573.5,371.8 575.0,371.0 576.5,370.5 578.0,370.2 579.5,370.2 581.0,371.0 582.5,372.7 584.0,375.1 585.5,378.2 587.0,381.8 588.5,384.7 590.0,387.4 591.5,389.1 593.0,390.0 594.5,390.1 596.0,389.7 597.5,389.0 599.0,388.8 600.5,388.5 602.0,388.3 603.5,387.8 605.0,386.7 606.5,385.3 608.0,383.5 609.5,381.9 611.0,380.9 612.5,380.3 614.0,380.2 615.5,380.8 617.0,381.9 618.5,383.2 620.0,384.5 621.5,385.7 623.0,386.8 624.5,387.8 626.0,388.7 627.5,389.5 629.0,389.9 630.5,390.0 632.0,389.8 633.5,389.4 635.0,388.6 636.5,387.5 638.0,386.8 639.5,386.7 641.0,387.5 642.5,389.0 644.0,391.2 645.5,394.1 647.0,396.6 648.5,398.4 650.0,399.5 651.5,399.7 653.0,398.2 654.5,394.3 656.0,388.5 657.5,382.4" fill="none" stroke="#ffff00" stroke-width="1" shape-rendering="crispEdges"/>
<polyline points="41.8,373.3 48.8,369.2 64.0,376.0 75.2,388.7 83.6,399.8 89.2,388.7 96.0,405.4 111.5,402.6 119.8,377.5 126.8,366.4 133.7,385.9 139.3,399.8 156.0,402.6 167.2,394.2 178.3,378.9 189.5,387.3 195.0,399.8 200.6,390.0 206.2,394.2 211.8,383.0 222.9,391.5 229.0,373.3 236.8,391.5 250.8,394.2 259.1,405.4 267.5,397.0 277.2,380.3 285.6,398.4 291.2,395.6 298.1,402.6 309.3,398.4 317.6,391.5 323.2,397.0 328.8,392.8 342.7,402.6 356.6,388.7 360.0,395.6 367.0,387.3 374.0,405.4 382.3,388.7 389.3,398.4 401.8,378.9 418.5,373.3 429.7,377.5 437.5,368.6 443.6,384.5 460.3,384.5 471.5,397.0 479.8,395.6 488.2,404.0 499.3,405.4 510.5,397.0 518.0,368.6 525.8,387.3 532.8,374.7 538.3,384.5 547.2,368.6 555.0,377.5 566.2,374.7 573.2,368.6 580.1,372.0 587.1,394.2 592.7,387.3 599.6,390.0 608.0,377.5 619.1,387.3 627.5,391.5 637.2,383.7 645.6,404.0 652.6,394.2 655.4,369.2 658.7,358.6" fill="none" stroke="#80ff00" stroke-width="1" shape-rendering="crispEdges"/>
<polyline points="33.4,447.4 36.2,443.9 39.0,441.9 41.1,442.7 43.2,446.0 45.5,442.4 47.9,436.5 50.2,432.1 52.5,432.3 54.8,430.6 57.1,430.2 59.4,432.3 61.8,432.3 64.1,433.5 65.5,444.6 67.8,443.6 70.1,443.0 72.4,444.1 74.7,446.7 77.1,449.5 79.4,451.6 81.7,450.3 84.1,445.9 86.4,444.6 89.2,449.1 92.0,453.0 94.8,454.1 97.5,455.8 100.0,458.2 102.4,459.7 104.8,462.5 107.3,465.5 109.4,464.2 111.5,462.8 114.2,457.6 117.0,450.2 119.3,448.2 121.7,448.3 124.0,447.4 126.3,451.0 128.7,454.2 131.0,455.8 133.8,458.5 136.5,462.8 139.3,461.1 142.1,461.4 144.2,464.3 146.3,466.1 148.4,466.5 150.5,468.3 152.6,468.5 154.7,472.2 156.7,472.2 158.8,473.9 161.6,472.2 164.4,468.3 166.5,470.7 168.6,472.5 171.3,466.4 174.1,458.6 176.4,458.7 178.8,461.2 181.1,461.4 183.9,459.3 186.7,458.6 189.0,461.2 191.3,465.1 193.6,467.0 195.7,462.3 197.8,455.8 200.6,456.4 203.4,458.6 206.2,453.0 209.0,448.8 211.1,450.6 213.2,453.0 217.3,444.1 220.1,447.9 222.9,451.6 225.0,439.2 227.1,427.4 229.9,447.4 232.2,447.8 234.5,449.5 236.8,451.6 239.1,451.0 241.5,450.2 243.8,448.0 245.9,448.1 248.0,450.7 250.1,452.4 252.2,453.0 254.6,450.7 257.0,451.8 259.5,448.9 261.9,448.8 263.3,454.4 265.8,453.5 268.2,452.2 270.7,451.2 273.1,449.7 275.2,450.7 277.2,452.5 279.3,454.5 281.4,455.8 283.5,454.9 285.6,454.8 287.7,453.6 289.8,453.0 292.0,454.5 294.2,455.1 296.5,458.3 298.7,459.7 300.9,461.4 303.0,461.4 305.1,463.5 307.2,464.2 309.3,464.2 311.4,459.2 313.5,454.4 317.6,460.0 320.4,456.4 323.2,454.4 325.3,455.0 327.4,454.8 329.5,455.5 331.6,457.2 333.8,458.7 336.0,459.5 338.3,462.0 340.5,463.9 342.7,465.5 344.9,463.0 347.2,463.3 349.4,460.6 351.7,461.0 353.9,459.1 358.0,467.0 360.0,461.4 362.8,459.3 365.6,455.8 367.7,458.5 369.8,459.9 371.9,463.8 374.0,466.4 376.3,462.5 378.6,460.5 380.9,455.8 385.0,460.0 387.2,457.7 389.5,458.1 391.7,457.1 394.0,455.0 396.2,453.0 398.3,455.9 400.4,457.2 402.8,451.9 405.3,449.4 407.8,443.6 410.2,439.1 412.9,441.7 415.7,441.9 417.9,443.0 420.1,441.0 422.3,442.6 424.4,443.0 426.6,440.8 428.8,441.5 431.0,441.9 433.4,431.4 435.8,419.6 439.4,437.7 441.5,436.1 443.6,437.3 445.7,435.0 447.8,434.9 449.9,438.5 452.0,440.5 454.4,440.3 456.9,441.9 459.3,443.7 461.7,443.3 464.1,441.8 466.6,441.3 469.1,441.2 471.5,440.5 473.6,441.8 475.6,442.7 477.7,444.8 479.8,447.4 482.6,454.9 485.4,464.2 487.6,466.2 489.8,466.3 492.1,467.7 494.3,466.6 496.5,468.3 498.6,468.0 500.7,465.2 502.8,465.3 504.9,464.2 507.2,463.2 509.6,461.0 511.9,460.0 514.6,440.5 516.7,446.3 518.8,450.2 521.1,452.2 523.5,454.1 525.8,455.8 527.9,450.5 530.0,443.3 532.3,445.5 534.6,451.0 536.9,453.0 539.5,449.0 542.0,444.1 544.6,440.8 547.2,435.7 550.9,443.3 553.0,442.7 555.1,444.6 557.1,443.5 559.2,442.9 561.3,444.0 563.4,443.3 565.5,441.7 567.6,439.7 569.7,439.7 571.8,437.7 573.9,436.9 576.0,439.2 578.0,438.1 580.1,439.1 582.2,450.6 584.3,461.4 586.6,460.8 589.0,457.9 591.3,455.8 594.0,457.3 596.8,458.0 599.3,452.2 601.9,447.4 604.1,447.5 606.3,449.0 608.6,450.7 610.8,453.0 613.1,453.5 615.4,453.3 617.8,453.7 620.1,455.0 622.4,453.2 624.7,454.4 627.5,450.9 630.3,448.8 632.4,449.5 634.5,448.3 636.5,448.6 638.6,450.2 641.4,455.7 644.2,461.9 646.5,458.8 648.9,457.5 651.2,455.8 653.3,441.1 655.4,427.9 658.7,422.4" fill="none" stroke="#80ff00" stroke-width="1" shape-rendering="crispEdges"/>
<g shape-rendering="crispEdges">
<rect x="5" y="529" width="1" height="2" fill="#ffff00" />
<rect x="7" y="527" width="1" height="4" fill="#ffff00" />
<rect x="9" y="529" width="1" height="2" fill="#ffff00" />
<rect x="11" y="528" width="1" height="3" fill="#ffff00" />
<rect x="13" y="528" width="1" height="3" fill="#ffff00" />
<rect x="15" y="527" width="1" height="4" fill="#ffff00" />
<rect x="17" y="529" width="1" height="2" fill="#ffff00" />
<rect x="20" y="526" width="1" height="5" fill="#ffff00" />
<rect x="22" y="528" width="1" height="3" fill="#ffff00" />
<rect x="24" y="528" width="1" height="3" fill="#ffff00" />
<rect x="26" y="528" width="1" height="3" fill="#ffff00" />
<rect x="28" y="528" width="1" height="3" fill="#ffff00" />
<rect x="30" y="528" width="1" height="3" fill="#ffff00" />
<rect x="32" y="526" width="1" height="5" fill="#ffff00" />
<rect x="34" y="528" width="1" height="3" fill="#ffff00" />
<rect x="36" y="528" width="1" height="3" fill="#ffff00" />
<rect x="38" y="528" width="1" height="3" fill="#ffff00" />
<rect x="40" y="527" width="1" height="4" fill="#ffff00" />
<rect x="42" y="527" width="1" height="4" fill="#ffff00" />
<rect x="44" y="527" width="1" height="4" fill="#ffff00" />
<rect x="47" y="528" width="1" height="3" fill="#ffff00" />
<rect x="49" y="528" width="1" height="3" fill="#ffff00" />
<rect x="51" y="526" width="1" height="5" fill="#ffff00" />
<rect x="53" y="527" width="1" height="4" fill="#ffff00" />
<rect x="55" y="529" width="1" height="2" fill="#ffff00" />
<rect x="57" y="529" width="1" height="2" fill="#ffff00" />
<rect x="59" y="526" width="1" height="5" fill="#ffff00" />
<rect x="61" y="529" width="1" height="2" fill="#ffff00" />
<rect x="63" y="526" width="1" height="5" fill="#ffff00" />
<rect x="65" y="526" width="1" height="5" fill="#ffff00" />
<rect x="67" y="528" width="1" height="3" fill="#ffff00" />
<rect x="69" y="528" width="1" height="3" fill="#ffff00" />
<rect x="71" y="528" width="1" height="3" fill="#ffff00" />
<rect x="73" y="528" width="1" height="3" fill="#ffff00" />
<rect x="76" y="528" width="1" height="3" fill="#ffff00" />
<rect x="78" y="526" width="1" height="5" fill="#ffff00" />
<rect x="80" y="528" width="1" height="3" fill="#ffff00" />
<rect x="82" y="527" width="1" height="4" fill="#ffff00" />
<rect x="84" y="528" width="1" height="3" fill="#ffff00" />
<rect x="86" y="528" width="1" height="3" fill="#ffff00" />
<rect x="88" y="528" width="1" height="3" fill="#ffff00" />
<rect x="90" y="528" width="1" height="3" fill="#ffff00" />
<rect x="92" y="528" width="1" height="3" fill="#ffff00" />
<rect x="94" y="528" width="1" height="3" fill="#ffff00" />
<rect x="96" y="529" width="1" height="2" fill="#ffff00" />
<rect x="98" y="526" width="1" height="5" fill="#ffff00" />
<rect x="100" y="528" width="1" height="3" fill="#ffff00" />
<rect x="103" y="528" width="1" height="3" fill="#ffff00" />
<rect x="105" y="527" width="1" height="4" fill="#ffff00" />
<rect x="107" y="528" width="1" height="3" fill="#ffff00" />
<rect x="109" y="526" width="1" height="5" fill="#ffff00" />
<rect x="111" y="529" width="1" height="2" fill="#ffff00" />
<rect x="113" y="526" width="1" height="5" fill="#ffff00" />
<rect x="115" y="527" width="1" height="4" fill="#ffff00" />
<rect x="117" y="529" width="1" height="2" fill="#ffff00" />
<rect x="119" y="528" width="1" height="3" fill="#ffff00" />
<rect x="121" y="526" width="1" height="5" fill="#ffff00" />
<rect x="123" y="527" width="1" height="4" fill="#ffff00" />
<rect x="125" y="528" width="1" height="3" fill="#ffff00" />
<rect x="127" y="527" width="1" height="4" fill="#ffff00" />
<rect x="130" y="528" width="1" height="3" fill="#ffff00" />
<rect x="132" y="526" width="1" height="5" fill="#ffff00" />
<rect x="134" y="526" width="1" height="5" fill="#ffff00" />
<rect x="136" y="528" width="1" height="3" fill="#ffff00" />
<rect x="138" y="527" width="1" height="4" fill="#ffff00" />
<rect x="140" y="527" width="1" height="4" fill="#ffff00" />
<rect x="142" y="526" width="1" height="5" fill="#ffff00" />
<rect x="144" y="528" width="1" height="3" fill="#ffff00" />
<rect x="146" y="526" width="1" height="5" fill="#ffff00" />
<rect x="148" y="528" width="1" height="3" fill="#ffff00" />
<rect x="150" y="528" width="1" height="3" fill="#ffff00" />
<rect x="152" y="528" width="1" height="3" fill="#ffff00" />
<rect x="154" y="527" width="1" height="4" fill="#ffff00" />
<rect x="156" y="528" width="1" height="3" fill="#ffff00" />
<rect x="159" y="528" width="1" height="3" fill="#ffff00" />
<rect x="161" y="528" width="1" height="3" fill="#ffff00" />
<rect x="163" y="527" width="1" height="4" fill="#ffff00" />
<rect x="165" y="527" width="1" height="4" fill="#ffff00" />
<rect x="167" y="528" width="1" height="3" fill="#ffff00" />
<rect x="169" y="527" width="1" height="4" fill="#ffff00" />
<rect x="171" y="526" width="1" height="5" fill="#ffff00" />
<rect x="173" y="527" width="1" height="4" fill="#ffff00" />
<rect x="175" y="526" width="1" height="5" fill="#ffff00" />
<rect x="177" y="527" width="1" height="4" fill="#ffff00" />
<rect x="179" y="527" width="1" height="4" fill="#ffff00" />
<rect x="181" y="528" width="1" height="3" fill="#ffff00" />
<rect x="183" y="528" width="1" height="3" fill="#ffff00" />
<rect x="186" y="526" width="1" height="5" fill="#ffff00" />
<rect x="188" y="528" width="1" height="3" fill="#ffff00" />
<rect x="190" y="528" width="1" height="3" fill="#ffff00" />
<rect x="192" y="527" width="1" height="4" fill="#ffff00" />
<rect x="194" y="528" width="1" height="3" fill="#ffff00" />
<rect x="196" y="528" width="1" height="3" fill="#ffff00" />
<rect x="198" y="528" width="1" height="3" fill="#ffff00" />
<rect x="200" y="527" width="1" height="4" fill="#ffff00" />
<rect x="202" y="528" width="1" height="3" fill="#ffff00" />
<rect x="204" y="527" width="1" height="4" fill="#ffff00" />
<rect x="206" y="527" width="1" height="4" fill="#ffff00" />
<rect x="208" y="529" width="1" height="2" fill="#ffff00" />
<rect x="210" y="528" width="1" height="3" fill="#ffff00" />
<rect x="213" y="527" width="1" height="4" fill="#ffff00" />
<rect x="215" y="526" width="1" height="5" fill="#ffff00" />
<rect x="217" y="526" width="1" height="5" fill="#ffff00" />
<rect x="219" y="526" width="1" height="5" fill="#ffff00" />
<rect x="221" y="526" width="1" height="5" fill="#ffff00" />
<rect x="223" y="528" width="1" height="3" fill="#ffff00" />
<rect x="225" y="528" width="1" height="3" fill="#ffff00" />
<rect x="227" y="527" width="1" height="4" fill="#ffff00" />
<rect x="229" y="528" width="1" height="3" fill="#ffff00" />
<rect x="231" y="529" width="1" height="2" fill="#ffff00" />
<rect x="233" y="527" width="1" height="4" fill="#ffff00" />
<rect x="235" y="528" width="1" height="3" fill="#ffff00" />
<rect x="237" y="527" width="1" height="4" fill="#ffff00" />
<rect x="239" y="529" width="1" height="2" fill="#ffff00" />
<rect x="242" y="529" width="1" height="2" fill="#ffff00" />
<rect x="244" y="528" width="1" height="3" fill="#ffff00" />
<rect x="246" y="529" width="1" height="2" fill="#ffff00" />
<rect x="248" y="528" width="1" height="3" fill="#ffff00" />
<rect x="250" y="528" width="1" height="3" fill="#ffff00" />
<rect x="252" y="528" width="1" height="3" fill="#ffff00" />
<rect x="254" y="528" width="1" height="3" fill="#ffff00" />
<rect x="256" y="528" width="1" height="3" fill="#ffff00" />
<rect x="258" y="528" width="1" height="3" fill="#ffff00" />
<rect x="260" y="529" width="1" height="2" fill="#ffff00" />
<rect x="262" y="528" width="1" height="3" fill="#ffff00" />
<rect x="264" y="527" width="1" height="4" fill="#ffff00" />
<rect x="266" y="528" width="1" height="3" fill="#ffff00" />
<rect x="269" y="528" width="1" height="3" fill="#ffff00" />
<rect x="271" y="528" width="1" height="3" fill="#ffff00" />
<rect x="273" y="528" width="1" height="3" fill="#ffff00" />
<rect x="275" y="528" width="1" height="3" fill="#ffff00" />
<rect x="277" y="528" width="1" height="3" fill="#ffff00" />
<rect x="279" y="528" width="1" height="3" fill="#ffff00" />
<rect x="281" y="528" width="1" height="3" fill="#ffff00" />
<rect x="283" y="528" width="1" height="3" fill="#ffff00" />
<rect x="285" y="529" width="1" height="2" fill="#ffff00" />
<rect x="287" y="527" width="1" height="4" fill="#ffff00" />
<rect x="289" y="528" width="1" height="3" fill="#ffff00" />
<rect x="291" y="526" width="1" height="5" fill="#ffff00" />
<rect x="293" y="528" width="1" height="3" fill="#ffff00" />
<rect x="296" y="527" width="1" height="4" fill="#ffff00" />
<rect x="298" y="528" width="1" height="3" fill="#ffff00" />
<rect x="300" y="528" width="1" height="3" fill="#ffff00" />
<rect x="302" y="528" width="1" height="3" fill="#ffff00" />
<rect x="304" y="528" width="1" height="3" fill="#ffff00" />
<rect x="306" y="528" width="1" height="3" fill="#ffff00" />
<rect x="308" y="528" width="1" height="3" fill="#ffff00" />
<rect x="310" y="528" width="1" height="3" fill="#ffff00" />
<rect x="312" y="528" width="1" height="3" fill="#ffff00" />
<rect x="314" y="527" width="1" height="4" fill="#ffff00" />
<rect x="316" y="526" width="1" height="5" fill="#ffff00" />
<rect x="318" y="528" width="1" height="3" fill="#ffff00" />
<rect x="320" y="528" width="1" height="3" fill="#ffff00" />
<rect x="322" y="528" width="1" height="3" fill="#ffff00" />
<rect x="325" y="528" width="1" height="3" fill="#ffff00" />
<rect x="327" y="527" width="1" height="4" fill="#ffff00" />
<rect x="329" y="527" width="1" height="4" fill="#ffff00" />
<rect x="331" y="527" width="1" height="4" fill="#ffff00" />
<rect x="333" y="527" width="1" height="4" fill="#ffff00" />
<rect x="335" y="527" width="1" height="4" fill="#ffff00" />
<rect x="337" y="528" width="1" height="3" fill="#ffff00" />
<rect x="339" y="527" width="1" height="4" fill="#ffff00" />
<rect x="341" y="527" width="1" height="4" fill="#ffff00" />
<rect x="343" y="527" width="1" height="4" fill="#ffff00" />
<rect x="345" y="528" width="1" height="3" fill="#ffff00" />
<rect x="347" y="527" width="1" height="4" fill="#ffff00" />
<rect x="349" y="527" width="1" height="4" fill="#ffff00" />
<rect x="352" y="529" width="1" height="2" fill="#ffff00" />
<rect x="354" y="526" width="1" height="5" fill="#ffff00" />
<rect x="356" y="526" width="1" height="5" fill="#ffff00" />
<rect x="358" y="527" width="1" height="4" fill="#ffff00" />
<rect x="360" y="529" width="1" height="2" fill="#ffff00" />
<rect x="362" y="528" width="1" height="3" fill="#ffff00" />
<rect x="364" y="527" width="1" height="4" fill="#ffff00" />
<rect x="366" y="528" width="1" height="3" fill="#ffff00" />
<rect x="368" y="527" width="1" height="4" fill="#ffff00" />
<rect x="370" y="526" width="1" height="5" fill="#ffff00" />
<rect x="372" y="528" width="1" height="3" fill="#ffff00" />
<rect x="374" y="527" width="1" height="4" fill="#ffff00" />
<rect x="376" y="526" width="1" height="5" fill="#ffff00" />
<rect x="379" y="528" width="1" height="3" fill="#ffff00" />
<rect x="381" y="526" width="1" height="5" fill="#ffff00" />
<rect x="383" y="529" width="1" height="2" fill="#ffff00" />
<rect x="385" y="528" width="1" height="3" fill="#ffff00" />
<rect x="387" y="528" width="1" height="3" fill="#ffff00" />
<rect x="389" y="529" width="1" height="2" fill="#ffff00" />
<rect x="391" y="527" width="1" height="4" fill="#ffff00" />
<rect x="393" y="528" width="1" height="3" fill="#ffff00" />
<rect x="395" y="527" width="1" height="4" fill="#ffff00" />
<rect x="397" y="528" width="1" height="3" fill="#ffff00" />
<rect x="399" y="526" width="1" height="5" fill="#ffff00" />
<rect x="401" y="528" width="1" height="3" fill="#ffff00" />
<rect x="403" y="527" width="1" height="4" fill="#ffff00" />
<rect x="405" y="528" width="1" height="3" fill="#ffff00" />
<rect x="408" y="528" width="1" height="3" fill="#ffff00" />
<rect x="410" y="527" width="1" height="4" fill="#ffff00" />
<rect x="412" y="526" width="1" height="5" fill="#ffff00" />
<rect x="414" y="528" width="1" height="3" fill="#ffff00" />
<rect x="416" y="526" width="1" height="5" fill="#ffff00" />
<rect x="418" y="528" width="1" height="3" fill="#ffff00" />
<rect x="420" y="526" width="1" height="5" fill="#ffff00" />
<rect x="422" y="529" width="1" height="2" fill="#ffff00" />
<rect x="424" y="527" width="1" height="4" fill="#ffff00" />
<rect x="426" y="526" width="1" height="5" fill="#ffff00" />
<rect x="428" y="527" width="1" height="4" fill="#ffff00" />
<rect x="430" y="529" width="1" height="2" fill="#ffff00" />
<rect x="432" y="528" width="1" height="3" fill="#ffff00" />
<rect x="435" y="527" width="1" height="4" fill="#ffff00" />
<rect x="437" y="528" width="1" height="3" fill="#ffff00" />
<rect x="439" y="528" width="1" height="3" fill="#ffff00" />
<rect x="441" y="526" width="1" height="5" fill="#ffff00" />
<rect x="443" y="528" width="1" height="3" fill="#ffff00" />
<rect x="445" y="528" width="1" height="3" fill="#ffff00" />
<rect x="447" y="528" width="1" height="3" fill="#ffff00" />
<rect x="449" y="526" width="1" height="5" fill="#ffff00" />
<rect x="451" y="526" width="1" height="5" fill="#ffff00" />
<rect x="453" y="528" width="1" height="3" fill="#ffff00" />
<rect x="455" y="527" width="1" height="4" fill="#ffff00" />
<rect x="457" y="527" width="1" height="4" fill="#ffff00" />
<rect x="459" y="528" width="1" height="3" fill="#ffff00" />
<rect x="462" y="527" width="1" height="4" fill="#ffff00" />
<rect x="464" y="527" width="1" height="4" fill="#ffff00" />
<rect x="466" y="528" width="1" height="3" fill="#ffff00" />
<rect x="468" y="527" width="1" height="4" fill="#ffff00" />
<rect x="470" y="528" width="1" height="3" fill="#ffff00" />
<rect x="472" y="527" width="1" height="4" fill="#ffff00" />
<rect x="474" y="528" width="1" height="3" fill="#ffff00" />
<rect x="476" y="527" width="1" height="4" fill="#ffff00" />
<rect x="478" y="527" width="1" height="4" fill="#ffff00" />
<rect x="480" y="527" width="1" height="4" fill="#ffff00" />
<rect x="482" y="526" width="1" height="5" fill="#ffff00" />
<rect x="484" y="526" width="1" height="5" fill="#ffff00" />
<rect x="486" y="528" width="1" height="3" fill="#ffff00" />
<rect x="488" y="527" width="1" height="4" fill="#ffff00" />
<rect x="491" y="528" width="1" height="3" fill="#ffff00" />
<rect x="493" y="526" width="1" height="5" fill="#ffff00" />
<rect x="495" y="528" width="1" height="3" fill="#ffff00" />
<rect x="497" y="526" width="1" height="5" fill="#ffff00" />
<rect x="499" y="529" width="1" height="2" fill="#ffff00" />
<rect x="501" y="529" width="1" height="2" fill="#ffff00" />
<rect x="503" y="528" width="1" height="3" fill="#ffff00" />
<rect x="505" y="527" width="1" height="4" fill="#ffff00" />
<rect x="507" y="529" width="1" height="2" fill="#ffff00" />
<rect x="509" y="527" width="1" height="4" fill="#ffff00" />
<rect x="511" y="526" width="1" height="5" fill="#ffff00" />
<rect x="513" y="528" width="1" height="3" fill="#ffff00" />
<rect x="515" y="526" width="1" height="5" fill="#ffff00" />
<rect x="518" y="526" width="1" height="5" fill="#ffff00" />
<rect x="520" y="527" width="1" height="4" fill="#ffff00" />
<rect x="522" y="528" width="1" height="3" fill="#ffff00" />
<rect x="524" y="526" width="1" height="5" fill="#ffff00" />
<rect x="526" y="526" width="1" height="5" fill="#ffff00" />
<rect x="528" y="527" width="1" height="4" fill="#ffff00" />
<rect x="530" y="529" width="1" height="2" fill="#ffff00" />
<rect x="532" y="528" width="1" height="3" fill="#ffff00" />
<rect x="534" y="528" width="1" height="3" fill="#ffff00" />
<rect x="536" y="527" width="1" height="4" fill="#ffff00" />
<rect x="538" y="526" width="1" height="5" fill="#ffff00" />
<rect x="540" y="528" width="1" height="3" fill="#ffff00" />
<rect x="542" y="526" width="1" height="5" fill="#ffff00" />
<rect x="545" y="528" width="1" height="3" fill="#ffff00" />
<rect x="547" y="527" width="1" height="4" fill="#ffff00" />
<rect x="549" y="527" width="1" height="4" fill="#ffff00" />
<rect x="551" y="529" width="1" height="2" fill="#ffff00" />
<rect x="553" y="528" width="1" height="3" fill="#ffff00" />
<rect x="555" y="528" width="1" height="3" fill="#ffff00" />
<rect x="557" y="528" width="1" height="3" fill="#ffff00" />
<rect x="559" y="527" width="1" height="4" fill="#ffff00" />
<rect x="561" y="529" width="1" height="2" fill="#ffff00" />
<rect x="563" y="526" width="1" height="5" fill="#ffff00" />
<rect x="565" y="527" width="1" height="4" fill="#ffff00" />
<rect x="567" y="528" width="1" height="3" fill="#ffff00" />
<rect x="569" y="528" width="1" height="3" fill="#ffff00" />
<rect x="571" y="527" width="1" height="4" fill="#ffff00" />
<rect x="574" y="528" width="1" height="3" fill="#ffff00" />
<rect x="576" y="527" width="1" height="4" fill="#ffff00" />
<rect x="578" y="528" width="1" height="3" fill="#ffff00" />
<rect x="580" y="528" width="1" height="3" fill="#ffff00" />
<rect x="582" y="528" width="1" height="3" fill="#ffff00" />
<rect x="584" y="528" width="1" height="3" fill="#ffff00" />
<rect x="586" y="527" width="1" height="4" fill="#ffff00" />
<rect x="588" y="528" width="1" height="3" fill="#ffff00" />
<rect x="590" y="528" width="1" height="3" fill="#ffff00" />
<rect x="592" y="527" width="1" height="4" fill="#ffff00" />
<rect x="594" y="527" width="1" height="4" fill="#ffff00" />
<rect x="596" y="527" width="1" height="4" fill="#ffff00" />
<rect x="598" y="527" width="1" height="4" fill="#ffff00" />
<rect x="601" y="528" width="1" height="3" fill="#ffff00" />
<rect x="603" y="528" width="1" height="3" fill="#ffff00" />
<rect x="605" y="528" width="1" height="3" fill="#ffff00" />
<rect x="607" y="527" width="1" height="4" fill="#ffff00" />
<rect x="609" y="528" width="1" height="3" fill="#ffff00" />
<rect x="611" y="527" width="1" height="4" fill="#ffff00" />
<rect x="613" y="526" width="1" height="5" fill="#ffff00" />
<rect x="615" y="528" width="1" height="3" fill="#ffff00" />
<rect x="617" y="528" width="1" height="3" fill="#ffff00" />
<rect x="619" y="527" width="1" height="4" fill="#ffff00" />
<rect x="621" y="527" width="1" height="4" fill="#ffff00" />
<rect x="623" y="528" width="1" height="3" fill="#ffff00" />
<rect x="625" y="526" width="1" height="5" fill="#ffff00" />
<rect x="628" y="527" width="1" height="4" fill="#ffff00" />
<rect x="630" y="526" width="1" height="5" fill="#ffff00" />
<rect x="632" y="528" width="1" height="3" fill="#ffff00" />
<rect x="634" y="528" width="1" height="3" fill="#ffff00" />
<rect x="636" y="527" width="1" height="4" fill="#ffff00" />
<rect x="638" y="529" width="1" height="2" fill="#ffff00" />
<rect x="640" y="527" width="1" height="4" fill="#ffff00" />
<rect x="642" y="528" width="1" height="3" fill="#ffff00" />
<rect x="644" y="528" width="1" height="3" fill="#ffff00" />
<rect x="646" y="527" width="1" height="4" fill="#ffff00" />
<rect x="648" y="529" width="1" height="2" fill="#ffff00" />
<rect x="650" y="529" width="1" height="2" fill="#ffff00" />
<rect x="652" y="527" width="1" height="4" fill="#ffff00" />
<rect x="654" y="528" width="1" height="3" fill="#ffff00" />
<rect x="657" y="529" width="1" height="2" fill="#ffff00" />
<rect x="659" y="528" width="1" height="3" fill="#ffff00" />
<rect x="50" y="519" width="1" height="12" fill="#ffff00" />
<rect x="216" y="518" width="1" height="13" fill="#ffff00" />
<rect x="227" y="505" width="1" height="26" fill="#ffff00" />
<rect x="229" y="511" width="1" height="20" fill="#ffff00" />
<rect x="234" y="513" width="1" height="18" fill="#ffff00" />
<rect x="312" y="521" width="1" height="10" fill="#ffff00" />
<rect x="407" y="519" width="1" height="12" fill="#ffff00" />
<rect x="435" y="503" width="1" height="28" fill="#ffff00" />
<rect x="439" y="507" width="1" height="24" fill="#ffff00" />
<rect x="515" y="522" width="1" height="9" fill="#ffff00" />
<rect x="538" y="519" width="1" height="12" fill="#ffff00" />
<rect x="544" y="504" width="1" height="27" fill="#ffff00" />
<rect x="547" y="510" width="1" height="21" fill="#ffff00" />
<rect x="550" y="521" width="1" height="10" fill="#ffff00" />
<rect x="566" y="523" width="1" height="8" fill="#ffff00" />
<rect x="577" y="514" width="1" height="17" fill="#ffff00" />
<rect x="601" y="495" width="1" height="36" fill="#ffff00" />
<rect x="656" y="489" width="1" height="42" fill="#ffff00" />
<rect x="658" y="499" width="1" height="32" fill="#ffff00" />
</g>
<g shape-rendering="crispEdges">
<rect x="661" y="26" width="1" height="417" fill="#fff" />
<rect x="661" y="442" width="1" height="120" fill="#0000ff" />
<rect x="662" y="25" width="4" height="1" fill="#ffff00" />
<rect x="662" y="39" width="4" height="1" fill="#ffff00" />
<rect x="662" y="53" width="4" height="1" fill="#ffff00" />
<rect x="662" y="67" width="4" height="1" fill="#ffff00" />
<rect x="662" y="81" width="4" height="1" fill="#ffff00" />
<rect x="662" y="95" width="4" height="1" fill="#ffff00" />
<rect x="662" y="109" width="4" height="1" fill="#ffff00" />
<rect x="662" y="123" width="4" height="1" fill="#ffff00" />
<rect x="662" y="137" width="4" height="1" fill="#ffff00" />
<rect x="662" y="151" width="4" height="1" fill="#ffff00" />
<rect x="662" y="164" width="4" height="1" fill="#ffff00" />
<rect x="662" y="178" width="4" height="1" fill="#ffff00" />
<rect x="662" y="192" width="4" height="1" fill="#ffff00" />
<rect x="662" y="206" width="4" height="1" fill="#ffff00" />
<rect x="662" y="220" width="4" height="1" fill="#ffff00" />
<rect x="662" y="234" width="4" height="1" fill="#ffff00" />
<rect x="662" y="248" width="4" height="1" fill="#ffff00" />
<rect x="662" y="262" width="4" height="1" fill="#ffff00" />
<rect x="662" y="276" width="4" height="1" fill="#ffff00" />
<rect x="662" y="26" width="4" height="1" fill="#ffff00" />
<rect x="662" y="292" width="4" height="1" fill="#ffff00" />
<rect x="662" y="300" width="4" height="1" fill="#ffff00" />
<rect x="662" y="308" width="4" height="1" fill="#ffff00" />
<rect x="662" y="316" width="4" height="1" fill="#ffff00" />
<rect x="662" y="324" width="4" height="1" fill="#ffff00" />
<rect x="662" y="332" width="4" height="1" fill="#ffff00" />
<rect x="662" y="339" width="4" height="1" fill="#ffff00" />
<rect x="662" y="347" width="4" height="1" fill="#ffff00" />
<rect x="662" y="357" width="4" height="1" fill="#ffff00" />
<rect x="662" y="362" width="4" height="1" fill="#ffff00" />
<rect x="662" y="367" width="4" height="1" fill="#ffff00" />
<rect x="662" y="373" width="4" height="1" fill="#ffff00" />
<rect x="662" y="378" width="4" height="1" fill="#ffff00" />
<rect x="662" y="384" width="4" height="1" fill="#ffff00" />
<rect x="662" y="389" width="4" height="1" fill="#ffff00" />
<rect x="662" y="395" width="4" height="1" fill="#ffff00" />
<rect x="662" y="400" width="4" height="1" fill="#ffff00" />
<rect x="662" y="405" width="4" height="1" fill="#ffff00" />
<rect x="662" y="419" width="4" height="1" fill="#ffff00" />
<rect x="662" y="428" width="4" height="1" fill="#ffff00" />
<rect x="662" y="436" width="4" height="1" fill="#ffff00" />
<rect x="662" y="444" width="4" height="1" fill="#ffff00" />
<rect x="662" y="452" width="4" height="1" fill="#ffff00" />
<rect x="662" y="460" width="4" height="1" fill="#ffff00" />
<rect x="662" y="468" width="4" height="1" fill="#ffff00" />
<rect x="662" y="476" width="4" height="1" fill="#ffff00" />
<rect x="662" y="488" width="4" height="1" fill="#ffff00" />
<rect x="662" y="495" width="4" height="1" fill="#ffff00" />
<rect x="662" y="502" width="4" height="1" fill="#ffff00" />
<rect x="662" y="508" width="4" height="1" fill="#ffff00" />
<rect x="662" y="515" width="4" height="1" fill="#ffff00" />
<rect x="662" y="522" width="4" height="1" fill="#ffff00" />
<rect x="662" y="528" width="4" height="1" fill="#ffff00" />
</g>
<text x="670.5" y="57.3" fill="#fff" font-size="12" text-anchor="start" >1.40</text>
<text x="670.5" y="85.3" fill="#fff" font-size="12" text-anchor="start" >1.30</text>
<text x="670.5" y="113.3" fill="#fff" font-size="12" text-anchor="start" >1.20</text>
<rect x="662" y="95" width="54" height="16" fill="#ccffcc" shape-rendering="crispEdges"/>
<text x="662.8" y="107" fill="#101010" font-size="12" text-anchor="start" >1.25</text>
<text x="670.5" y="141.3" fill="#fff" font-size="12" text-anchor="start" >1.10</text>
<text x="670.5" y="168.3" fill="#fff" font-size="12" text-anchor="start" >1.00</text>
<text x="670.5" y="196.3" fill="#fff" font-size="12" text-anchor="start" >0.90</text>
<text x="670.5" y="224.3" fill="#fff" font-size="12" text-anchor="start" >0.80</text>
<text x="670.5" y="252.3" fill="#fff" font-size="12" text-anchor="start" >0.70</text>
<text x="670.5" y="280.3" fill="#fff" font-size="12" text-anchor="start" >0.6</text>
<text x="670.5" y="320.3" fill="#fff" font-size="12" text-anchor="start" >0.02</text>
<text x="670.5" y="344.3" fill="#fff" font-size="12" text-anchor="start" >-0.01</text>
<text x="670.5" y="371.3" fill="#fff" font-size="12" text-anchor="start" >70</text>
<text x="670.5" y="387.3" fill="#fff" font-size="12" text-anchor="start" >40</text>
<text x="670.5" y="404.3" fill="#fff" font-size="12" text-anchor="start" >10</text>
<text x="670.5" y="431.3" fill="#fff" font-size="12" text-anchor="start" >80</text>
<text x="670.5" y="447.3" fill="#fff" font-size="12" text-anchor="start" >60</text>
<text x="670.5" y="464.3" fill="#fff" font-size="12" text-anchor="start" >40</text>
<text x="670.5" y="480.3" fill="#fff" font-size="12" text-anchor="start" >20</text>
<text x="670.5" y="505.3" fill="#fff" font-size="12" text-anchor="start" >90M</text>
<text x="670.5" y="525.3" fill="#fff" font-size="12" text-anchor="start" >30M</text>
<text x="234.4" y="37.5" fill="#4da0ff" font-size="12" text-anchor="start" textLength="194.4" lengthAdjust="spacing">CYBERPLANET INTERACTIVE [day]</text>
<text x="154.2" y="301" fill="#4da0ff" font-size="12" text-anchor="start" textLength="354.6" lengthAdjust="spacing">Moving Average Convergence / Divergence(26,12,9),Value Line(0)</text>
<text x="123" y="362" fill="#4da0ff" font-size="12" text-anchor="start" textLength="416.7" lengthAdjust="spacing">Slow Stochastics Oscillator(14,3,3),Overbought Level(80),Oversold Level(20)</text>
<text x="106.2" y="422.7" fill="#4da0ff" font-size="12" text-anchor="start" textLength="450.6" lengthAdjust="spacing">Relative Strength Index(CLOSE,14,30,70),Overbought Level(70),Oversold Level(30)</text>
<text x="311.1" y="496.7" fill="#4da0ff" font-size="12" text-anchor="start" textLength="39.9" lengthAdjust="spacing">Volume</text>
<g shape-rendering="crispEdges">
<rect x="2" y="531" width="660" height="1" fill="#ffff00" />
<rect x="2" y="546" width="660" height="1" fill="#ffff00" />
<rect x="2" y="561" width="660" height="1" fill="#ffff00" />
<rect x="2" y="531" width="1" height="31" fill="#ffff00" />
<rect x="4" y="531" width="1" height="31" fill="#ffff00" />
<rect x="85" y="531" width="1" height="16" fill="#ffff00" />
<rect x="166" y="531" width="1" height="16" fill="#ffff00" />
<rect x="247" y="531" width="1" height="16" fill="#ffff00" />
<rect x="328" y="531" width="1" height="16" fill="#ffff00" />
<rect x="409" y="531" width="1" height="16" fill="#ffff00" />
<rect x="490" y="531" width="1" height="16" fill="#ffff00" />
<rect x="571" y="531" width="1" height="16" fill="#ffff00" />
<rect x="652" y="531" width="1" height="16" fill="#ffff00" />
<rect x="15" y="546" width="1" height="16" fill="#ffff00" />
<rect x="58" y="546" width="1" height="16" fill="#ffff00" />
<rect x="104" y="546" width="1" height="16" fill="#ffff00" />
<rect x="151" y="546" width="1" height="16" fill="#ffff00" />
<rect x="188" y="546" width="1" height="16" fill="#ffff00" />
<rect x="234" y="546" width="1" height="16" fill="#ffff00" />
<rect x="277" y="546" width="1" height="16" fill="#ffff00" />
<rect x="326" y="546" width="1" height="16" fill="#ffff00" />
<rect x="372" y="546" width="1" height="16" fill="#ffff00" />
<rect x="415" y="546" width="1" height="16" fill="#ffff00" />
<rect x="463" y="546" width="1" height="16" fill="#ffff00" />
<rect x="512" y="546" width="1" height="16" fill="#ffff00" />
<rect x="551" y="546" width="1" height="16" fill="#ffff00" />
<rect x="599" y="546" width="1" height="16" fill="#ffff00" />
<rect x="641" y="546" width="1" height="16" fill="#ffff00" />
</g>
<text x="7.3" y="541.8" fill="#fff" font-size="11" text-anchor="start" >26/12</text>
<text x="88.3" y="541.8" fill="#fff" font-size="11" text-anchor="start" >17/02</text>
<text x="169.3" y="541.8" fill="#fff" font-size="11" text-anchor="start" >17/04</text>
<text x="250.3" y="541.8" fill="#fff" font-size="11" text-anchor="start" >12/06</text>
<text x="331.3" y="541.8" fill="#fff" font-size="11" text-anchor="start" >03/08</text>
<text x="412.3" y="541.8" fill="#fff" font-size="11" text-anchor="start" >26/09</text>
<text x="493.3" y="541.8" fill="#fff" font-size="11" text-anchor="start" >19/11</text>
<text x="574.3" y="541.8" fill="#fff" font-size="11" text-anchor="start" >15/01</text>
<text x="7.3" y="556.8" fill="#fff" font-size="11" text-anchor="start" >2555</text>
<text x="17.8" y="556.8" fill="#fff" font-size="11" text-anchor="start" >2555</text>
<text x="60.8" y="556.8" fill="#fff" font-size="11" text-anchor="start" >Feb</text>
<text x="106.8" y="556.8" fill="#fff" font-size="11" text-anchor="start" >Mar</text>
<text x="153.8" y="556.8" fill="#fff" font-size="11" text-anchor="start" >Apr</text>
<text x="190.8" y="556.8" fill="#fff" font-size="11" text-anchor="start" >May</text>
<text x="236.8" y="556.8" fill="#fff" font-size="11" text-anchor="start" >Jun</text>
<text x="279.8" y="556.8" fill="#fff" font-size="11" text-anchor="start" >Jul</text>
<text x="328.8" y="556.8" fill="#fff" font-size="11" text-anchor="start" >Aug</text>
<text x="374.8" y="556.8" fill="#fff" font-size="11" text-anchor="start" >Sep</text>
<text x="417.8" y="556.8" fill="#fff" font-size="11" text-anchor="start" >Oct</text>
<text x="465.8" y="556.8" fill="#fff" font-size="11" text-anchor="start" >Nov</text>
<text x="514.8" y="556.8" fill="#fff" font-size="11" text-anchor="start" >Dec</text>
<text x="553.8" y="556.8" fill="#fff" font-size="11" text-anchor="start" >2556</text>
<text x="601.8" y="556.8" fill="#fff" font-size="11" text-anchor="start" >Feb</text>
<g shape-rendering="crispEdges">
<rect x="2" y="0" width="714" height="1" fill="#403450" />
<rect x="2" y="1" width="113" height="21" fill="#fff" />
<rect x="97" y="2" width="17" height="19" fill="#ebebef" />
<path d="M103.5 10.5h5l-2.5 3z" fill="#000"/>
<rect x="116.5" y="1.5" width="599" height="22" fill="none" stroke="#ffff00"/>
<rect x="472" y="2" width="1" height="21" fill="#ffff00" />
<rect x="552" y="2" width="1" height="21" fill="#ffff00" />
<rect x="632" y="2" width="1" height="21" fill="#ffff00" />
<rect x="633" y="21" width="82" height="1" fill="#d0d0d0" />
</g>
<text x="4.8" y="15.2" fill="#000" font-size="10" text-anchor="start" textLength="31.5" lengthAdjust="spacing">CYBER</text>
<text x="550.5" y="18" fill="#fff" font-size="11" text-anchor="end" >316/300</text>
<text x="629.5" y="18" fill="#fff" font-size="11" text-anchor="end" >0.92</text>
<text x="643" y="18" fill="#fff" font-size="11" text-anchor="start" textLength="62.8" lengthAdjust="spacing">Linear(Auto)</text>
<g shape-rendering="crispEdges">
<rect x="2" y="562" width="450" height="1" fill="#e8e8e8" />
<rect x="2" y="563" width="447" height="11" fill="#aaa6ac" />
<rect x="3" y="563" width="19" height="11" fill="#f4f4f4" />
<rect x="21.5" y="563" width="4.5" height="11" fill="#6c6070" />
<rect x="423" y="563" width="4" height="11" fill="#6c6070" />
<rect x="429" y="563" width="19.5" height="11" fill="#f4f4f4" />
<rect x="427" y="563" width="2.5" height="11" fill="#000" />
<rect x="422" y="563" width="1" height="11" fill="#f0f0f0" />
<rect x="26" y="563" width="1" height="11" fill="#f0f0f0" />
<rect x="450" y="562" width="266" height="12" fill="#000" />
<path d="M13 566v11l-5.5-5.5z" fill="#000"/><path d="M437 566v11l5.5-5.5z" fill="#000"/>
<rect x="452" y="566.5" width="3" height="2.5" fill="#e8d8e8" />
<rect x="452" y="570.5" width="3" height="2.5" fill="#e8d8e8" />
<rect x="512" y="567" width="1" height="7" fill="#fff" />
<rect x="567" y="567" width="1" height="7" fill="#fff" />
<rect x="613" y="567" width="1" height="7" fill="#fff" />
<rect x="659" y="567" width="1" height="7" fill="#fff" />
<rect x="706" y="567" width="1" height="7" fill="#fff" />
</g>
<text x="465" y="576.3" fill="#ffff00" font-size="12" font-weight="bold" font-family="Liberation Serif,serif">F</text>
<text x="472" y="577" fill="#ffff00" font-size="8" font-weight="bold" font-family="Liberation Serif,serif">+</text>
<text x="489.7" y="576.3" fill="#ffff00" font-size="12" font-weight="bold" font-family="Liberation Serif,serif">F</text>
<text x="497" y="577" fill="#ffff00" font-size="8" font-weight="bold" font-family="Liberation Serif,serif">-</text>
<text x="525" y="576.2" fill="#fff" font-size="11.5" text-anchor="start" font-weight="bold" textLength="23" lengthAdjust="spacingAndGlyphs">FULL</text>
<text x="581.6" y="576.2" fill="#fff" font-size="11.5" text-anchor="start" font-weight="bold" textLength="16.5" lengthAdjust="spacing">1 Y</text>
<text x="625" y="576.2" fill="#fff" font-size="11.5" text-anchor="start" font-weight="bold" textLength="19.8" lengthAdjust="spacing">6 M</text>
<text x="671" y="576.2" fill="#fff" font-size="11.5" text-anchor="start" font-weight="bold" textLength="19.5" lengthAdjust="spacing">3 M</text>
<g shape-rendering="crispEdges"><rect x="716" y="0" width="2" height="574" fill="#746c7c"/><rect x="718" y="0" width="3" height="574" fill="#989cb8"/><rect x="721" y="0" width="1" height="574" fill="#f4f4f8"/></g>
</svg>
<div class="a" style="left:722px;top:0px;width:609px;height:27px;background:#f7f7f7;border-top:1px solid #5a525a;border-bottom:1px solid #707070;"></div>
<div class="a" style="left:722.5px;top:1px;width:73.5px;height:21.5px;background:#fff;"></div>
<div class="a" style="left:796px;top:2px;width:15px;height:20.5px;background:#f1f1f3;"></div>
<div class="a" style="left:863.5px;top:1px;width:31.5px;height:21.5px;background:#fff;"></div>
<div class="a" style="left:895px;top:2px;width:15.5px;height:20.5px;background:#f1f1f3;"></div>
<div class="a" style="left:950px;top:1px;width:31.700000000000045px;height:21.5px;background:#fff;"></div>
<div class="a" style="left:981.7px;top:2px;width:15.799999999999955px;height:20.5px;background:#f1f1f3;"></div>
<div class="a" style="left:1008px;top:1px;width:68px;height:21.5px;background:#fff;"></div>
<div class="a" style="left:1076px;top:2px;width:15.599999999999909px;height:20.5px;background:#f1f1f3;"></div>
<div class="a" style="left:1102.2px;top:1px;width:42.399999999999864px;height:21.5px;background:#fff;"></div>
<div class="a" style="left:1144.6px;top:2px;width:16.200000000000045px;height:20.5px;background:#f1f1f3;"></div>
<div class="a" style="left:1170.6px;top:1px;width:65.40000000000009px;height:21.5px;background:#fff;"></div>
<div class="a" style="left:1236px;top:2px;width:15.700000000000045px;height:20.5px;background:#f1f1f3;"></div>
<div class="a" style="left:813px;top:2px;width:50px;height:20.5px;background:#f1f1f3;"></div>
<div class="a" style="left:912px;top:2px;width:38px;height:20.5px;background:#f1f1f3;"></div>
<div class="a" style="left:999px;top:2px;width:9px;height:20.5px;background:#f1f1f3;"></div>
<div class="a" style="left:1093.5px;top:2px;width:8.7px;height:20.5px;background:#f1f1f3;"></div>
<div class="a" style="left:1162.5px;top:2px;width:8px;height:20.5px;background:#f1f1f3;"></div>
<div class="btn" style="left:1263.5px;top:3px;width:38px;height:21px;"></div>
<div class="a" style="left:722px;top:245.5px;width:609px;height:19.5px;background:#0000ff;"></div>
<div class="a" style="left:722px;top:265px;width:103px;height:20.5px;background:#707470;"></div>
<div class="a" style="left:722px;top:285.5px;width:103px;height:20.25px;background:#707470;"></div>
<div class="a" style="left:722px;top:305.75px;width:103px;height:19.75px;background:#707470;"></div>
<div class="a" style="left:825px;top:245px;width:1px;height:81px;background:#303030;"></div>
<div class="a" style="left:927px;top:245px;width:1px;height:81px;background:#303030;"></div>
<div class="a" style="left:1029px;top:245px;width:1px;height:81px;background:#303030;"></div>
<div class="a" style="left:1131px;top:245px;width:1px;height:81px;background:#303030;"></div>
<div class="a" style="left:1233px;top:245px;width:1px;height:81px;background:#303030;"></div>
<div class="a" style="left:722px;top:265px;width:609px;height:1px;background:#303030;"></div>
<div class="a" style="left:722px;top:285px;width:609px;height:1px;background:#303030;"></div>
<div class="a" style="left:722px;top:305px;width:609px;height:1px;background:#303030;"></div>
<div class="a" style="left:722px;top:325px;width:609px;height:1px;background:#303030;"></div>
<div class="a" style="left:892px;top:330px;width:12px;height:12px;background:#d4d4d4;border:1px solid #f4f4f4;box-shadow:inset 1px 1px 0 #909090;"></div>
<div class="a" style="left:722px;top:364px;width:609px;height:4px;background:#dfe6ea;"></div>
<div class="a" style="left:722px;top:368px;width:609px;height:1px;background:#fff;"></div>
<div class="a" style="left:722px;top:369px;width:609px;height:12.4px;background:#c6cce0;"></div>
<div class="a" style="left:1210.5px;top:368.5px;width:62.5px;height:12px;background:#101070;"></div>
<div class="a" style="left:1276px;top:368px;width:43px;height:13px;background:#008080;border:1px solid #d8d8d8;"></div>
<div class="a" style="left:1321.5px;top:368px;width:10px;height:13px;background:#000;border-left:1px solid #d8d8d8;"></div>
<div class="a" style="left:722px;top:381px;width:609px;height:1px;background:#68686e;"></div>
<div class="a" style="left:722px;top:382px;width:66.5px;height:23px;background:#fbfbfb;"></div>
<div class="a" style="left:788.5px;top:384px;width:66px;height:20.5px;background:#d9d9d9;border:1px solid #9c9c9c;border-bottom:none;"></div>
<div class="a" style="left:722px;top:404px;width:609px;height:39px;background:#f6f6f6;"></div>
<div class="a" style="left:726px;top:413px;width:600px;height:1px;background:#e4e4e4;"></div>
<div class="a" style="left:731px;top:407px;width:65px;height:10px;background:#f6f6f6;"></div>
<div class="a" style="left:724.8px;top:418.8px;width:98.4px;height:18.4px;background:#fff;border:1px solid #d0d0d0;"></div>
<div class="a" style="left:827.3px;top:418.8px;width:135.5px;height:18.4px;background:#fff;border:1px solid #d0d0d0;"></div>
<div class="btn" style="left:970.5px;top:418px;width:53px;height:19px;"></div>
<div class="btn" style="left:1031.5px;top:418px;width:27px;height:19px;"></div>
<div class="btn" style="left:1066.5px;top:418px;width:52.5px;height:19px;"></div>
<div class="a" style="left:1126.5px;top:413px;width:1.5px;height:28px;background:#e4e4e4;"></div>
<div class="a" style="left:1132.75px;top:418px;width:32px;height:19px;border:1px solid #b8b8b8;border-radius:3px;background:#f4f4f4;"></div>
<div class="a" style="left:1135.25px;top:420.5px;width:27px;height:14px;background:#808080;"></div>
<div class="a" style="left:1173.5px;top:418px;width:32px;height:19px;border:1px solid #b8b8b8;border-radius:3px;background:#f4f4f4;"></div>
<div class="a" style="left:1176.0px;top:420.5px;width:27px;height:14px;background:#808080;"></div>
<div class="a" style="left:1214.75px;top:418px;width:32px;height:19px;border:1px solid #b8b8b8;border-radius:3px;background:#f4f4f4;"></div>
<div class="a" style="left:1217.25px;top:420.5px;width:27px;height:14px;background:#808080;"></div>
<div class="a" style="left:1256px;top:418px;width:32px;height:19px;border:1px solid #b8b8b8;border-radius:3px;background:#f4f4f4;"></div>
<div class="a" style="left:1258.5px;top:420.5px;width:27px;height:14px;background:#808080;"></div>
<div class="a" style="left:724.8px;top:442.5px;width:606.2px;height:131.5px;background:#000;"></div>
<div class="a" style="left:1311.5px;top:442.5px;width:19.5px;height:131.5px;background:#f2f2f2;"></div>
<div class="a" style="left:1313px;top:462px;width:14px;height:26px;background:linear-gradient(90deg,#f4f4f4,#d4d4d4);border:1px solid #989898;border-radius:2px;"></div>
<div class="a" style="left:1316px;top:471px;width:8px;height:1px;background:#505050;"></div>
<div class="a" style="left:1316px;top:474px;width:8px;height:1px;background:#505050;"></div>
<div class="a" style="left:1316px;top:477px;width:8px;height:1px;background:#505050;"></div>
<svg width="1331" height="574" viewBox="0 0 1331 574"><path d="M801.0 11h5l-2.5 3z" fill="#000"/>
<text x="727" y="16.5" font-size="9.5" fill="#000" text-anchor="start" textLength="31" lengthAdjust="spacing" >CYBER</text>
<path d="M900.2 11h5l-2.5 3z" fill="#000"/>
<text x="867" y="16.5" font-size="11" fill="#000" text-anchor="start" textLength="23" lengthAdjust="spacing" >2009</text>
<path d="M987.1 11h5l-2.5 3z" fill="#000"/>
<text x="954.2" y="16.5" font-size="11" fill="#000" text-anchor="start" textLength="23.4" lengthAdjust="spacing" >2014</text>
<path d="M1081.3 11h5l-2.5 3z" fill="#000"/>
<text x="1011.5" y="16.5" font-size="10.5" fill="#000" text-anchor="start" textLength="61.5" lengthAdjust="spacing" >Consolidated</text>
<path d="M1150.2 11h5l-2.5 3z" fill="#000"/>
<text x="1105.7" y="16.5" font-size="10.5" fill="#000" text-anchor="start" textLength="37" lengthAdjust="spacing" >Quarter</text>
<path d="M1241.3 11h5l-2.5 3z" fill="#000"/>
<text x="1175" y="16.5" font-size="10.5" fill="#000" text-anchor="start" textLength="56" lengthAdjust="spacing" >2D-UpDown</text>
<text x="825" y="15.5" font-size="11.5" fill="#000" text-anchor="start" font-weight="bold" textLength="33.7" lengthAdjust="spacing" >From :</text>
<text x="924" y="15.7" font-size="11.5" fill="#000" text-anchor="start" font-weight="bold" textLength="21.5" lengthAdjust="spacing" >To :</text>
<text x="1274.7" y="16.8" font-size="10" fill="#000" text-anchor="start" textLength="12.5" lengthAdjust="spacing" >Go</text>
<g shape-rendering="crispEdges">
<line x1="775" y1="50.5" x2="1315.5" y2="50.5" stroke="#403a40" stroke-dasharray="1 1"/>
<line x1="775" y1="66.5" x2="1315.5" y2="66.5" stroke="#403a40" stroke-dasharray="1 1"/>
<line x1="775" y1="83.5" x2="1315.5" y2="83.5" stroke="#403a40" stroke-dasharray="1 1"/>
<line x1="775" y1="116.5" x2="1315.5" y2="116.5" stroke="#403a40" stroke-dasharray="1 1"/>
<line x1="775" y1="132.5" x2="1315.5" y2="132.5" stroke="#403a40" stroke-dasharray="1 1"/>
<line x1="775" y1="148.5" x2="1315.5" y2="148.5" stroke="#403a40" stroke-dasharray="1 1"/>
<line x1="775" y1="165.5" x2="1315.5" y2="165.5" stroke="#403a40" stroke-dasharray="1 1"/>
<line x1="775" y1="181.5" x2="1315.5" y2="181.5" stroke="#403a40" stroke-dasharray="1 1"/>
<line x1="775" y1="198.5" x2="1315.5" y2="198.5" stroke="#403a40" stroke-dasharray="1 1"/>
<line x1="775" y1="214.5" x2="1315.5" y2="214.5" stroke="#403a40" stroke-dasharray="1 1"/>
<line x1="775.5" y1="50" x2="775.5" y2="215" stroke="#403a40" stroke-dasharray="1 1"/>
<line x1="919.5" y1="50" x2="919.5" y2="215" stroke="#403a40" stroke-dasharray="1 1"/>
<line x1="1047.5" y1="50" x2="1047.5" y2="215" stroke="#403a40" stroke-dasharray="1 1"/>
<line x1="1175.5" y1="50" x2="1175.5" y2="215" stroke="#403a40" stroke-dasharray="1 1"/>
<line x1="1315.5" y1="50" x2="1315.5" y2="215" stroke="#403a40" stroke-dasharray="1 1"/>
<rect x="806.5" y="90.5" width="32" height="9" fill="#008000" stroke="#dcdcdc"/>
<rect x="838.5" y="99.5" width="32" height="19" fill="#ff0000" stroke="#dcdcdc"/>
<rect x="870.5" y="99.5" width="33" height="21" fill="#ff0000" stroke="#dcdcdc"/>
<rect x="934.5" y="80.5" width="33" height="19" fill="#008000" stroke="#dcdcdc"/>
<rect x="967.5" y="99.5" width="32" height="33" fill="#ff0000" stroke="#dcdcdc"/>
<rect x="999.5" y="99.5" width="32" height="18" fill="#ff0000" stroke="#dcdcdc"/>
<rect x="1063.5" y="90.5" width="32" height="9" fill="#008000" stroke="#dcdcdc"/>
<rect x="1095.5" y="99.5" width="32" height="45" fill="#ff0000" stroke="#dcdcdc"/>
<rect x="1127.5" y="99.5" width="32" height="17" fill="#ff0000" stroke="#dcdcdc"/>
<rect x="1191.5" y="99.5" width="32" height="26" fill="#ff0000" stroke="#dcdcdc"/>
<rect x="1223.5" y="99.5" width="32" height="86" fill="#ff0000" stroke="#dcdcdc"/>
<rect x="1255.5" y="99.5" width="32" height="33" fill="#ff0000" stroke="#dcdcdc"/>
<line x1="775" y1="99.5" x2="1315.5" y2="99.5" stroke="#ffff00"/>
</g>
<text x="773.3" y="55.3" font-size="12" fill="#ffff00" text-anchor="end" >30</text>
<text x="773.3" y="71.3" font-size="12" fill="#ffff00" text-anchor="end" >20</text>
<text x="773.3" y="88.3" font-size="12" fill="#ffff00" text-anchor="end" >10</text>
<text x="773.3" y="104.3" font-size="12" fill="#ffff00" text-anchor="end" >0</text>
<text x="773.3" y="121.3" font-size="12" fill="#ffff00" text-anchor="end" >-10</text>
<text x="773.3" y="137.3" font-size="12" fill="#ffff00" text-anchor="end" >-20</text>
<text x="773.3" y="153.3" font-size="12" fill="#ffff00" text-anchor="end" >-30</text>
<text x="773.3" y="170.3" font-size="12" fill="#ffff00" text-anchor="end" >-40</text>
<text x="773.3" y="186.3" font-size="12" fill="#ffff00" text-anchor="end" >-50</text>
<text x="773.3" y="203.3" font-size="12" fill="#ffff00" text-anchor="end" >-60</text>
<text x="773.3" y="219.3" font-size="12" fill="#ffff00" text-anchor="end" >-70</text>
<text x="756" y="42" font-size="12" fill="#ffff00" text-anchor="start" font-weight="bold" textLength="41" lengthAdjust="spacing" >M Baht</text>
<text x="823.0" y="225.1" font-size="12" fill="#ffff00" text-anchor="middle" >10</text>
<text x="855.1" y="225.1" font-size="12" fill="#ffff00" text-anchor="middle" >11</text>
<text x="887.2" y="225.1" font-size="12" fill="#ffff00" text-anchor="middle" >12</text>
<text x="847.7" y="240.3" font-size="12" fill="#fff" text-anchor="start" font-weight="bold" textLength="17.8" lengthAdjust="spacing" >1Q</text>
<text x="951.2" y="225.1" font-size="12" fill="#ffff00" text-anchor="middle" >10</text>
<text x="983.3" y="225.1" font-size="12" fill="#ffff00" text-anchor="middle" >11</text>
<text x="1015.4" y="225.1" font-size="12" fill="#ffff00" text-anchor="middle" >12</text>
<text x="975.9" y="240.3" font-size="12" fill="#fff" text-anchor="start" font-weight="bold" textLength="17.8" lengthAdjust="spacing" >2Q</text>
<text x="1079.4" y="225.1" font-size="12" fill="#ffff00" text-anchor="middle" >10</text>
<text x="1111.5" y="225.1" font-size="12" fill="#ffff00" text-anchor="middle" >11</text>
<text x="1143.6" y="225.1" font-size="12" fill="#ffff00" text-anchor="middle" >12</text>
<text x="1104.1" y="240.3" font-size="12" fill="#fff" text-anchor="start" font-weight="bold" textLength="17.8" lengthAdjust="spacing" >3Q</text>
<text x="1207.6" y="225.1" font-size="12" fill="#ffff00" text-anchor="middle" >10</text>
<text x="1239.7" y="225.1" font-size="12" fill="#ffff00" text-anchor="middle" >11</text>
<text x="1271.8" y="225.1" font-size="12" fill="#ffff00" text-anchor="middle" >12</text>
<text x="1232.3" y="240.3" font-size="12" fill="#fff" text-anchor="start" font-weight="bold" textLength="17.8" lengthAdjust="spacing" >4Q</text>
<text x="1272.5" y="240.6" font-size="12" fill="#ffff00" text-anchor="start" font-weight="bold" textLength="53.7" lengthAdjust="spacing" >Quadrant</text>
<text x="757.25" y="260" font-size="13" fill="#fff" text-anchor="start" font-weight="bold" textLength="31.75" lengthAdjust="spacing" >Year</text>
<text x="867.25" y="260" font-size="13" fill="#fff" text-anchor="start" font-weight="bold" textLength="17.5" lengthAdjust="spacing" >1Q</text>
<text x="968.5" y="260" font-size="13" fill="#fff" text-anchor="start" font-weight="bold" textLength="18" lengthAdjust="spacing" >2Q</text>
<text x="1070.25" y="260" font-size="13" fill="#fff" text-anchor="start" font-weight="bold" textLength="18" lengthAdjust="spacing" >3Q</text>
<text x="1172" y="260" font-size="13" fill="#fff" text-anchor="start" font-weight="bold" textLength="18.5" lengthAdjust="spacing" >4Q</text>
<text x="1269" y="260" font-size="13" fill="#fff" text-anchor="start" font-weight="bold" textLength="28.5" lengthAdjust="spacing" >Sum</text>
<text x="757.25" y="279.8" font-size="13" fill="#fff" text-anchor="start" font-weight="bold" textLength="31.75" lengthAdjust="spacing" >2010</text>
<text x="923" y="279.8" font-size="13" fill="#00e000" text-anchor="end" >5.73</text>
<text x="1025" y="279.8" font-size="13" fill="#00e000" text-anchor="end" >11.48</text>
<text x="1127" y="279.8" font-size="13" fill="#00e000" text-anchor="end" >5.91</text>
<text x="1229" y="279.8" font-size="13" fill="#ff0000" text-anchor="end" >-16.70</text>
<text x="1330" y="279.8" font-size="13" fill="#00e000" text-anchor="end" >6.42</text>
<text x="757.25" y="299.8" font-size="13" fill="#fff" text-anchor="start" font-weight="bold" textLength="31.75" lengthAdjust="spacing" >2011</text>
<text x="923" y="299.8" font-size="13" fill="#ff0000" text-anchor="end" >-12.23</text>
<text x="1025" y="299.8" font-size="13" fill="#ff0000" text-anchor="end" >-20.94</text>
<text x="1127" y="299.8" font-size="13" fill="#ff0000" text-anchor="end" >-27.95</text>
<text x="1229" y="299.8" font-size="13" fill="#ff0000" text-anchor="end" >-52.88</text>
<text x="1330" y="299.8" font-size="13" fill="#ff0000" text-anchor="end" >-113.99</text>
<text x="757.25" y="319.8" font-size="13" fill="#fff" text-anchor="start" font-weight="bold" textLength="31.75" lengthAdjust="spacing" >2012</text>
<text x="923" y="319.8" font-size="13" fill="#ff0000" text-anchor="end" >-13.45</text>
<text x="1025" y="319.8" font-size="13" fill="#ff0000" text-anchor="end" >-11.75</text>
<text x="1127" y="319.8" font-size="13" fill="#ff0000" text-anchor="end" >-10.95</text>
<text x="1229" y="319.8" font-size="13" fill="#ff0000" text-anchor="end" >-21.01</text>
<text x="1330" y="319.8" font-size="13" fill="#ff0000" text-anchor="end" >-57.16</text>
<text x="727" y="339" font-size="11.5" fill="#fff" text-anchor="start" textLength="31.3" lengthAdjust="spacing" stroke="#fff" stroke-width="0.3">Fiscal</text>
<text x="766.6" y="339" font-size="11.5" fill="#fff" text-anchor="start" textLength="26.8" lengthAdjust="spacing" stroke="#fff" stroke-width="0.3">Year</text>
<text x="801.7" y="339" font-size="11.5" fill="#fff" text-anchor="start" textLength="21.1" lengthAdjust="spacing" stroke="#fff" stroke-width="0.3">End</text>
<text x="831.5" y="339" font-size="11.5" fill="#fff" text-anchor="start" stroke="#fff" stroke-width="0.3">:</text>
<text x="843.2" y="339" font-size="11.5" fill="#fff" text-anchor="start" textLength="33.9" lengthAdjust="spacing" stroke="#fff" stroke-width="0.3">31/12</text>
<text x="910.5" y="339.3" font-size="11.5" fill="#fff" text-anchor="start" textLength="30" lengthAdjust="spacing" stroke="#fff" stroke-width="0.3">Show</text>
<text x="946.3" y="339.3" font-size="11.5" fill="#fff" text-anchor="start" textLength="31" lengthAdjust="spacing" stroke="#fff" stroke-width="0.3">Fiscal</text>
<text x="982.6" y="339.3" font-size="11.5" fill="#fff" text-anchor="start" textLength="26.3" lengthAdjust="spacing" stroke="#fff" stroke-width="0.3">Year</text>
<text x="1013" y="339.3" font-size="11.5" fill="#fff" text-anchor="start" textLength="20.6" lengthAdjust="spacing" stroke="#fff" stroke-width="0.3">End</text>
<text x="722.6" y="377" font-size="11" fill="#101018" text-anchor="start" font-weight="bold" textLength="74" lengthAdjust="spacing" >[Link1] News</text>
<text x="1036" y="377" font-size="11" fill="#ffff00" text-anchor="start" font-weight="bold" textLength="118.5" lengthAdjust="spacing" >Previous 12 Month(s)</text>
<text x="1226.7" y="376.8" font-size="12" fill="#fff" text-anchor="start" font-weight="bold" textLength="31.5" lengthAdjust="spacing" >Reset</text>
<text x="1286.5" y="376.8" font-size="11.5" fill="#fff" text-anchor="start" font-weight="bold" textLength="22.2" lengthAdjust="spacing" >OUT</text>
<text x="1323.5" y="376.8" font-size="11.5" fill="#fff" text-anchor="start" font-weight="bold" >X</text>
<text x="728.4" y="397.1" font-size="12" fill="#000" text-anchor="start" textLength="49.8" lengthAdjust="spacing" stroke="#000" stroke-width="0.25">News (0)</text>
<text x="793.6" y="398.3" font-size="12" fill="#000" text-anchor="start" textLength="56.8" lengthAdjust="spacing" stroke="#000" stroke-width="0.25">RSSFeeds</text>
<text x="733.6" y="416.5" font-size="11" fill="#000" text-anchor="start" font-weight="bold" textLength="59.7" lengthAdjust="spacing" >Page : 1/1</text>
<text x="727" y="431.5" font-size="11" fill="#000" text-anchor="start" font-weight="bold" textLength="41" lengthAdjust="spacing" >CYBER</text>
<text x="831" y="431.5" font-size="11" fill="#000" text-anchor="start" font-weight="bold" textLength="46.8" lengthAdjust="spacing" >Keyword</text>
<text x="997" y="431.5" font-size="11" fill="#000" text-anchor="middle" font-weight="bold" >Search</text>
<g transform="translate(1035,421)" shape-rendering="crispEdges"><rect width="20" height="13" fill="#fff"/><rect width="20" height="2" fill="#e00020"/><rect y="4" width="20" height="5" fill="#2020c0"/><rect y="11" width="20" height="2" fill="#e00020"/><rect x="11" y="0" width="9" height="7" fill="#203090"/></g><g transform="translate(1035,421)"><path d="M11 0l9 7M20 0l-9 7" stroke="#fff" stroke-width="1.2"/><path d="M15.5 0v7M11 3.5h9" stroke="#e02020" stroke-width="1.2"/></g>
<text x="1092.7" y="431.5" font-size="11" fill="#000" text-anchor="middle" font-weight="bold" >Option</text>
<text x="1148.75" y="431.5" font-size="11" fill="#303030" text-anchor="middle" >&lt;&lt;</text>
<text x="1189.5" y="431.5" font-size="11" fill="#303030" text-anchor="middle" >&lt;</text>
<text x="1230.75" y="431.5" font-size="11" fill="#303030" text-anchor="middle" >&gt;</text>
<text x="1272" y="431.5" font-size="11" fill="#303030" text-anchor="middle" >&gt;&gt;</text>
<text x="753.6" y="458.5" font-size="13" fill="#f0c060" text-anchor="start" textLength="48.4" lengthAdjust="spacing" >12/03/13</text>
<text x="805.3" y="458.5" font-size="13" fill="#f0c060" text-anchor="start" textLength="30.2" lengthAdjust="spacing" >21:44</text>
<text x="842.8" y="458.5" font-size="13" fill="#f0c060" text-anchor="start" textLength="24.8" lengthAdjust="spacing" >SET</text>
<text x="875.5" y="458.5" font-size="13" fill="#f0c060" text-anchor="start" >[</text>
<text x="882.5" y="458.5" font-size="13" fill="#f0c060" text-anchor="start" textLength="45.1" lengthAdjust="spacing" >CYBER</text>
<text x="931.5" y="458.5" font-size="13" fill="#f0c060" text-anchor="start" >]</text>
<text x="941.5" y="458.5" font-size="13" fill="#f0c060" text-anchor="start" textLength="352.5" lengthAdjust="spacing" >Resolution of the BOD&#160; Meeting and Additional Agenda of t...</text>
<text x="753.6" y="478.6" font-size="13" fill="#f0c060" text-anchor="start" textLength="48.4" lengthAdjust="spacing" >12/03/13</text>
<text x="805.3" y="478.6" font-size="13" fill="#f0c060" text-anchor="start" textLength="30.2" lengthAdjust="spacing" >21:44</text>
<text x="842.8" y="478.6" font-size="13" fill="#f0c060" text-anchor="start" textLength="24.8" lengthAdjust="spacing" >SET</text>
<text x="875.5" y="478.6" font-size="13" fill="#f0c060" text-anchor="start" >[</text>
<text x="882.5" y="478.6" font-size="13" fill="#f0c060" text-anchor="start" textLength="45.1" lengthAdjust="spacing" >CYBER</text>
<text x="931.5" y="478.6" font-size="13" fill="#f0c060" text-anchor="start" >]</text>
<text x="941.4" y="478.6" font-size="12" fill="#f0c060" text-anchor="start" textLength="354" lengthAdjust="spacingAndGlyphs" font-family="Liberation Sans,Loma,Noto Sans Thai,Tahoma,sans-serif">แจ้งมติที่ประชุมคณะกรรมการบริษัท และเพิ่มวาระการประชุมสามัญผู้ถือหุ้นป...</text>
<text x="753.6" y="498.7" font-size="13" fill="#f0c060" text-anchor="start" textLength="48.4" lengthAdjust="spacing" >12/03/13</text>
<text x="805.3" y="498.7" font-size="13" fill="#f0c060" text-anchor="start" textLength="30.2" lengthAdjust="spacing" >21:16</text>
<text x="842.8" y="498.7" font-size="13" fill="#f0c060" text-anchor="start" textLength="24.8" lengthAdjust="spacing" >SET</text>
<text x="875.5" y="498.7" font-size="13" fill="#f0c060" text-anchor="start" >[</text>
<text x="882.5" y="498.7" font-size="13" fill="#f0c060" text-anchor="start" textLength="45.1" lengthAdjust="spacing" >CYBER</text>
<text x="931.5" y="498.7" font-size="13" fill="#f0c060" text-anchor="start" >]</text>
<text x="941.5" y="498.7" font-size="13" fill="#f0c060" text-anchor="start" textLength="207.5" lengthAdjust="spacing" >Capital increase report form (F53-4)</text>
<text x="753.6" y="518.8" font-size="13" fill="#f0c060" text-anchor="start" textLength="48.4" lengthAdjust="spacing" >12/03/13</text>
<text x="805.3" y="518.8" font-size="13" fill="#f0c060" text-anchor="start" textLength="30.2" lengthAdjust="spacing" >21:16</text>
<text x="842.8" y="518.8" font-size="13" fill="#f0c060" text-anchor="start" textLength="24.8" lengthAdjust="spacing" >SET</text>
<text x="875.5" y="518.8" font-size="13" fill="#f0c060" text-anchor="start" >[</text>
<text x="882.5" y="518.8" font-size="13" fill="#f0c060" text-anchor="start" textLength="45.1" lengthAdjust="spacing" >CYBER</text>
<text x="931.5" y="518.8" font-size="13" fill="#f0c060" text-anchor="start" >]</text>
<text x="941.7" y="518.8" font-size="12" fill="#f0c060" text-anchor="start" textLength="104.3" lengthAdjust="spacingAndGlyphs" font-family="Liberation Sans,Loma,Noto Sans Thai,Tahoma,sans-serif">แบบรายงานการเพิ่มทุน</text>
<text x="1049.5" y="518.8" font-size="13" fill="#f0c060" text-anchor="start" textLength="40.5" lengthAdjust="spacing" >(F53-4)</text>
<text x="753.6" y="538.9" font-size="13" fill="#f0c060" text-anchor="start" textLength="48.4" lengthAdjust="spacing" >12/03/13</text>
<text x="805.3" y="538.9" font-size="13" fill="#f0c060" text-anchor="start" textLength="30.2" lengthAdjust="spacing" >17:36</text>
<text x="842.8" y="538.9" font-size="13" fill="#f0c060" text-anchor="start" textLength="24.8" lengthAdjust="spacing" >SET</text>
<text x="875.5" y="538.9" font-size="13" fill="#f0c060" text-anchor="start" >[</text>
<text x="882.5" y="538.9" font-size="13" fill="#f0c060" text-anchor="start" textLength="45.1" lengthAdjust="spacing" >CYBER</text>
<text x="931.5" y="538.9" font-size="13" fill="#f0c060" text-anchor="start" >]</text>
<text x="941.7" y="538.9" font-size="13" fill="#f0c060" text-anchor="start" textLength="185.4" lengthAdjust="spacing" >Clarification of Trading Alert List</text>
<text x="753.6" y="559.0" font-size="13" fill="#f0c060" text-anchor="start" textLength="48.4" lengthAdjust="spacing" >12/03/13</text>
<text x="805.3" y="559.0" font-size="13" fill="#f0c060" text-anchor="start" textLength="30.2" lengthAdjust="spacing" >17:36</text>
<text x="842.8" y="559.0" font-size="13" fill="#f0c060" text-anchor="start" textLength="24.8" lengthAdjust="spacing" >SET</text>
<text x="875.5" y="559.0" font-size="13" fill="#f0c060" text-anchor="start" >[</text>
<text x="882.5" y="559.0" font-size="13" fill="#f0c060" text-anchor="start" textLength="45.1" lengthAdjust="spacing" >CYBER</text>
<text x="931.5" y="559.0" font-size="13" fill="#f0c060" text-anchor="start" >]</text>
<text x="941.7" y="559.0" font-size="12" fill="#f0c060" text-anchor="start" textLength="24.3" lengthAdjust="spacingAndGlyphs" font-family="Liberation Sans,Loma,Noto Sans Thai,Tahoma,sans-serif">ชี้แจง</text>
<text x="970.9" y="559.0" font-size="13" fill="#f0c060" text-anchor="start" textLength="98.8" lengthAdjust="spacing" >Trading Alert List</text>
<text x="753.6" y="579.1" font-size="13" fill="#f0c060" text-anchor="start" textLength="48.4" lengthAdjust="spacing" >12/03/13</text>
<text x="805.3" y="579.1" font-size="13" fill="#f0c060" text-anchor="start" textLength="30.2" lengthAdjust="spacing" >17:03</text>
<text x="842.8" y="579.1" font-size="13" fill="#f0c060" text-anchor="start" textLength="24.8" lengthAdjust="spacing" >SET</text>
<text x="875.5" y="579.1" font-size="13" fill="#f0c060" text-anchor="start" >[</text>
<text x="882.5" y="579.1" font-size="13" fill="#f0c060" text-anchor="start" textLength="45.1" lengthAdjust="spacing" >CYBER</text>
<text x="931.5" y="579.1" font-size="13" fill="#f0c060" text-anchor="start" >]</text>
<text x="941.7" y="579.1" font-size="13" fill="#f0c060" text-anchor="start" textLength="165.6" lengthAdjust="spacing" >Trading Alert List Information</text>
<path d="M1316.5 455l3.5-4l3.5 4z" fill="#404040"/><path d="M1316.5 563l3.5 4l3.5-4z" fill="#404040"/></svg>
</body></html>
